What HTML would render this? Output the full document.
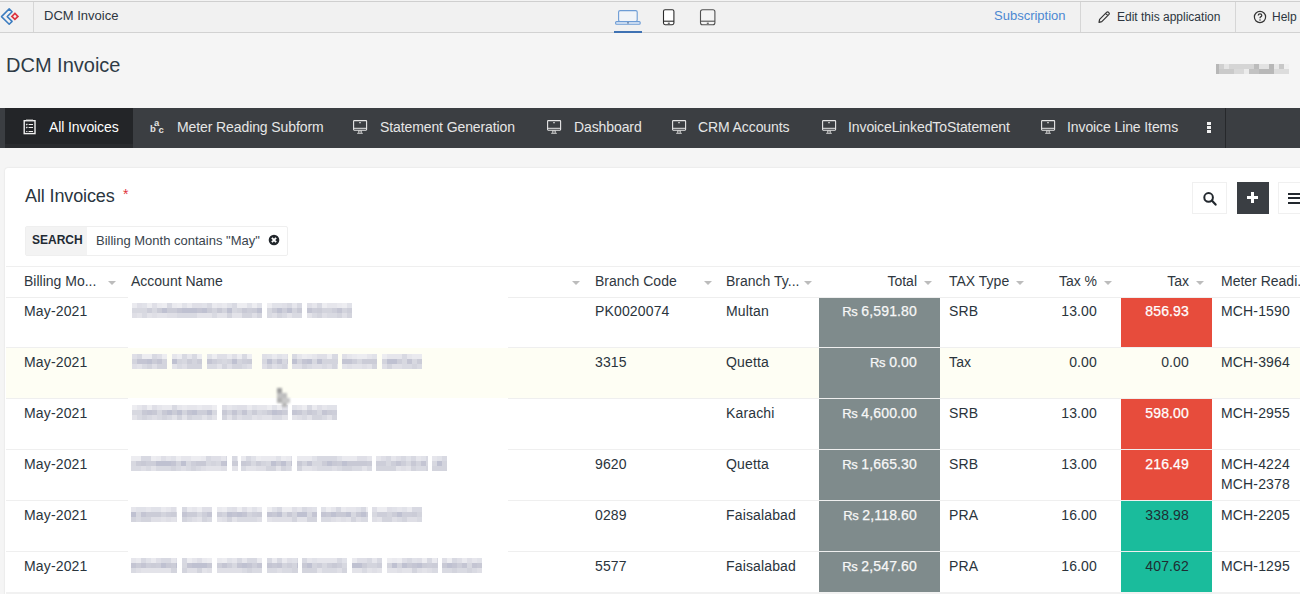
<!DOCTYPE html>
<html><head><meta charset="utf-8">
<style>
*{box-sizing:border-box;margin:0;padding:0}
html,body{width:1300px;height:594px;overflow:hidden;background:#f5f5f5;font-family:"Liberation Sans",sans-serif;color:#2f3740}
.abs{position:absolute;white-space:nowrap}
#top{position:absolute;left:0;top:0;width:1300px;height:33px;background:#f1f1f1;border-top:1px solid #f3f3f3;border-bottom:1px solid #d2d2d2}
.vsep{position:absolute;top:1px;width:1px;height:30px;background:#d6d6d6}
.tt{position:absolute;font-size:13px;white-space:nowrap;line-height:16px}
#hdr{position:absolute;left:0;top:33px;width:1300px;height:75px;background:#f5f5f5}
#nav{position:absolute;left:0;top:108px;width:1300px;height:40px;background:#3b3e42}
.tab{position:absolute;top:-1px;height:40px;color:#e6e6e6;font-size:14px;line-height:40px;letter-spacing:-0.1px;white-space:nowrap}
.tab svg{position:absolute}
#card{position:absolute;left:5px;top:168px;width:1300px;height:440px;background:#fff;border-radius:3px;box-shadow:0 0 2px rgba(0,0,0,.12)}
.th{font-size:14px;line-height:18px;color:#2f3740}
.arr{width:0;height:0;border-left:4px solid transparent;border-right:4px solid transparent;border-top:4px solid #bcbcbc}
.td{font-size:14px;line-height:20px;color:#2a343c;letter-spacing:0.15px}
.tot{color:#f7f7f7;-webkit-text-stroke:0.25px #f7f7f7}
.rs{font-size:13px;letter-spacing:-0.4px}
.bl{height:14px;background:linear-gradient(#e6e6ec 0,#dcdce4 30%,#c9cad4 45%,#cfd0d9 65%,#dadae2 80%,#e4e4ea 100%);filter:blur(0.7px)}
</style></head><body>
<div id="top">
  <div class="abs" style="left:0;top:0;width:1300px;height:1px;background:#cfcfcf"></div>
  <svg class="abs" style="left:0;top:0" width="22" height="30" viewBox="0 1 22 30">
    <path d="M9.2 8.9 L12.1 11.8 L7.2 16.6 L12.1 21.4 L9.2 24.3 L1.5 16.6 Z" fill="none" stroke="#3b7cc0" stroke-width="1.5" stroke-linejoin="round"/>
    <path d="M14.9 13.4 L17.9 16.4 L14.9 19.4 L11.9 16.4 Z" fill="none" stroke="#dd3540" stroke-width="1.7"/>
  </svg>
  <div class="vsep" style="left:33px"></div>
  <div class="tt" style="left:44px;top:7px;color:#2d3640">DCM Invoice</div>
  <!-- devices -->
  <svg class="abs" style="left:614px;top:7px" width="28" height="18" viewBox="0 0 28 18">
    <rect x="4.6" y="2.6" width="18.6" height="11" rx="1.5" fill="#f1f4f8" stroke="#6d9cd5" stroke-width="1.1"/>
    <rect x="1.6" y="13.6" width="24.6" height="2.6" rx="1" fill="#e6eef8" stroke="#6d9cd5" stroke-width="1.1"/>
    <rect x="13.2" y="14.4" width="1.6" height="1" fill="#2f4f78"/>
  </svg>
  <div class="abs" style="left:614px;top:30px;width:28px;height:2px;background:#3f72b3"></div>
  <svg class="abs" style="left:662px;top:7px" width="14" height="18" viewBox="0 0 14 18">
    <rect x="1.5" y="1.7" width="10.4" height="15" rx="1.6" fill="#fff" stroke="#2b2b2b" stroke-width="1.1"/>
    <line x1="1.5" y1="13.2" x2="12" y2="13.2" stroke="#2b2b2b" stroke-width="1.1"/>
    <rect x="5.8" y="14.7" width="2" height="1" fill="#2b2b2b"/>
  </svg>
  <svg class="abs" style="left:699px;top:7px" width="18" height="18" viewBox="0 0 18 18">
    <rect x="1.5" y="1.7" width="14.4" height="15" rx="2" fill="#f4f4f4" stroke="#505050" stroke-width="1.1"/>
    <line x1="1.5" y1="13.2" x2="16" y2="13.2" stroke="#505050" stroke-width="1.1"/>
    <rect x="7.8" y="14.7" width="2" height="1" fill="#333"/>
  </svg>
  <div class="tt" style="left:994px;top:7px;color:#4c88d2">Subscription</div>
  <div class="vsep" style="left:1080px"></div>
  <svg class="abs" style="left:1097px;top:9px" width="14" height="14" viewBox="0 0 14 14">
    <path d="M2 12.3 L2.6 9.4 L9.8 2.2 Q10.6 1.5 11.4 2.2 L12 2.8 Q12.7 3.6 12 4.4 L4.8 11.6 Z M8.6 3.4 L10.9 5.6" fill="none" stroke="#333" stroke-width="1.2" stroke-linejoin="round"/>
  </svg>
  <div class="tt" style="left:1117px;top:8px;font-size:12px;color:#2d3640">Edit this application</div>
  <div class="vsep" style="left:1235px"></div>
  <svg class="abs" style="left:1253px;top:9px" width="14" height="14" viewBox="0 0 14 14">
    <circle cx="7" cy="7" r="5.6" fill="none" stroke="#333" stroke-width="1.2"/>
    <path d="M5.2 5.6 Q5.2 3.8 7 3.8 Q8.8 3.8 8.8 5.4 Q8.8 6.4 7.6 6.9 Q7 7.2 7 8.2" fill="none" stroke="#333" stroke-width="1.2"/>
    <circle cx="7" cy="10" r="0.75" fill="#333"/>
  </svg>
  <div class="tt" style="left:1272px;top:8px;font-size:12px;color:#2d3640">Help</div>
</div>
<div id="hdr">
  <div class="abs" style="left:6px;top:20px;font-size:20px;line-height:24px;color:#2f3b46">DCM Invoice</div>
  <div class="abs" style="left:0;top:0;width:1300px;height:75px;filter:blur(0.6px)"><div class="abs" style="left:1216px;top:31px;width:3px;height:5px;background:#b7b7b7"></div><div class="abs" style="left:1219px;top:31px;width:5px;height:5px;background:#d0d0d0"></div><div class="abs" style="left:1224px;top:31px;width:5px;height:5px;background:#e5e5e5"></div><div class="abs" style="left:1229px;top:31px;width:25px;height:5px;background:#d5d5d5"></div><div class="abs" style="left:1254px;top:31px;width:5px;height:5px;background:#bcbcbc"></div><div class="abs" style="left:1259px;top:31px;width:10px;height:5px;background:#e2e2e2"></div><div class="abs" style="left:1269px;top:31px;width:5px;height:5px;background:#b7b7b7"></div><div class="abs" style="left:1274px;top:31px;width:5px;height:5px;background:#e8e8e8"></div><div class="abs" style="left:1279px;top:31px;width:5px;height:5px;background:#c8c8c8"></div><div class="abs" style="left:1284px;top:31px;width:5px;height:5px;background:#f0f0f0"></div><div class="abs" style="left:1216px;top:36px;width:3px;height:5px;background:#b7b7b7"></div><div class="abs" style="left:1219px;top:36px;width:15px;height:5px;background:#cacaca"></div><div class="abs" style="left:1234px;top:36px;width:10px;height:5px;background:#d9d9d9"></div><div class="abs" style="left:1244px;top:36px;width:5px;height:5px;background:#ececec"></div><div class="abs" style="left:1249px;top:36px;width:10px;height:5px;background:#c2c2c2"></div><div class="abs" style="left:1259px;top:36px;width:15px;height:5px;background:#b8b8b8"></div><div class="abs" style="left:1274px;top:36px;width:15px;height:5px;background:#dcdcdc"></div></div>
</div>
<div id="nav">
  <div class="abs" style="left:5px;top:0;width:128px;height:40px;background:#232528"></div><div class="abs" style="left:5px;top:36px;width:128px;height:4px;background:#292b2e"></div>
  <svg class="abs" style="left:22px;top:11px" width="15" height="16" viewBox="0 0 15 16"><rect x="2.2" y="1.7" width="10.8" height="12.9" fill="none" stroke="#f0f0f0" stroke-width="1.4"/><path d="M4.2 6 L5.4 4.8 M4.2 9 L5.4 7.8 M4.2 12.5 L5.4 12.5 M6.6 5.5 L11 5.5 M6.6 8.5 L11 8.5 M6.6 12.5 L11 12.5" stroke="#f0f0f0" stroke-width="1.2"/><path d="M4 1.2 L5 0.6 L6 1.2 L7 0.6 L8 1.2 L9 0.6 L10 1.2 L11 0.6" fill="none" stroke="#cfcfcf" stroke-width="0.8"/></svg>
  <div class="abs tab" style="left:49px;color:#fff">All Invoices</div>
    <svg class="abs" style="left:148px;top:9px" width="18" height="18" viewBox="0 0 18 18"><text x="6" y="9" font-family="Liberation Sans" font-weight="bold" font-size="9.5" fill="#e4e4e4">a</text><text x="2" y="14.8" font-family="Liberation Sans" font-weight="bold" font-size="9.5" fill="#e4e4e4">b</text><text x="10.6" y="16" font-family="Liberation Sans" font-weight="bold" font-size="9.5" fill="#e4e4e4">c</text></svg>
  <div class="abs tab" style="left:177px">Meter Reading Subform</div>
  <svg class="abs" style="left:352px;top:11px" width="16" height="16" viewBox="0 0 16 16"><rect x="1.6" y="1.6" width="13" height="9.6" rx="0.6" fill="none" stroke="#e6e6e6" stroke-width="1.1"/><line x1="1.6" y1="9.3" x2="14.6" y2="9.3" stroke="#e6e6e6" stroke-width="1"/><rect x="7" y="3.3" width="2" height="0.9" fill="#e6e6e6"/><path d="M6.2 11.8 L9.8 11.8 M5.2 14.3 L10.8 14.3 M6.8 11.5 L6.8 14 M9.2 11.5 L9.2 14" stroke="#d0d0d0" stroke-width="1"/></svg>
  <div class="abs tab" style="left:380px">Statement Generation</div>
  <svg class="abs" style="left:546px;top:11px" width="16" height="16" viewBox="0 0 16 16"><rect x="1.6" y="1.6" width="13" height="9.6" rx="0.6" fill="none" stroke="#e6e6e6" stroke-width="1.1"/><line x1="1.6" y1="9.3" x2="14.6" y2="9.3" stroke="#e6e6e6" stroke-width="1"/><rect x="7" y="3.3" width="2" height="0.9" fill="#e6e6e6"/><path d="M6.2 11.8 L9.8 11.8 M5.2 14.3 L10.8 14.3 M6.8 11.5 L6.8 14 M9.2 11.5 L9.2 14" stroke="#d0d0d0" stroke-width="1"/></svg>
  <div class="abs tab" style="left:574px">Dashboard</div>
  <svg class="abs" style="left:671px;top:11px" width="16" height="16" viewBox="0 0 16 16"><rect x="1.6" y="1.6" width="13" height="9.6" rx="0.6" fill="none" stroke="#e6e6e6" stroke-width="1.1"/><line x1="1.6" y1="9.3" x2="14.6" y2="9.3" stroke="#e6e6e6" stroke-width="1"/><rect x="7" y="3.3" width="2" height="0.9" fill="#e6e6e6"/><path d="M6.2 11.8 L9.8 11.8 M5.2 14.3 L10.8 14.3 M6.8 11.5 L6.8 14 M9.2 11.5 L9.2 14" stroke="#d0d0d0" stroke-width="1"/></svg>
  <div class="abs tab" style="left:698px">CRM Accounts</div>
  <svg class="abs" style="left:821px;top:11px" width="16" height="16" viewBox="0 0 16 16"><rect x="1.6" y="1.6" width="13" height="9.6" rx="0.6" fill="none" stroke="#e6e6e6" stroke-width="1.1"/><line x1="1.6" y1="9.3" x2="14.6" y2="9.3" stroke="#e6e6e6" stroke-width="1"/><rect x="7" y="3.3" width="2" height="0.9" fill="#e6e6e6"/><path d="M6.2 11.8 L9.8 11.8 M5.2 14.3 L10.8 14.3 M6.8 11.5 L6.8 14 M9.2 11.5 L9.2 14" stroke="#d0d0d0" stroke-width="1"/></svg>
  <div class="abs tab" style="left:848px">InvoiceLinkedToStatement</div>
  <svg class="abs" style="left:1040px;top:11px" width="16" height="16" viewBox="0 0 16 16"><rect x="1.6" y="1.6" width="13" height="9.6" rx="0.6" fill="none" stroke="#e6e6e6" stroke-width="1.1"/><line x1="1.6" y1="9.3" x2="14.6" y2="9.3" stroke="#e6e6e6" stroke-width="1"/><rect x="7" y="3.3" width="2" height="0.9" fill="#e6e6e6"/><path d="M6.2 11.8 L9.8 11.8 M5.2 14.3 L10.8 14.3 M6.8 11.5 L6.8 14 M9.2 11.5 L9.2 14" stroke="#d0d0d0" stroke-width="1"/></svg>
  <div class="abs tab" style="left:1067px">Invoice Line Items</div>
  <div class="abs" style="left:1207px;top:14px;width:4px;height:3px;background:#f0f0f0"></div><div class="abs" style="left:1207px;top:18px;width:4px;height:3px;background:#f0f0f0"></div><div class="abs" style="left:1207px;top:22px;width:4px;height:3px;background:#f0f0f0"></div>
  <div class="abs" style="left:1225px;top:0;width:1px;height:40px;background:#26282b"></div>
</div>
<div id="card"></div>
<div class="abs" style="left:25px;top:185px;font-size:18px;line-height:22px;letter-spacing:-0.12px;color:#2a3540">All Invoices</div>
<div class="abs" style="left:123px;top:186px;font-size:14px;line-height:16px;color:#e0343c">*</div>
<div class="abs" style="left:25px;top:226px;width:263px;height:30px;border:1px solid #efefef;background:#fff;border-radius:2px"></div>
<div class="abs" style="left:26px;top:227px;width:61px;height:28px;background:#f3f3f3"></div>
<div class="abs" style="left:32px;top:232px;font-size:12px;line-height:16px;font-weight:bold;color:#1f2a33">SEARCH</div>
<div class="abs" style="left:96px;top:233px;font-size:13px;line-height:16px;color:#3a444d">Billing Month contains "May"</div>
<svg class="abs" style="left:268px;top:234px" width="12" height="12" viewBox="0 0 12 12"><circle cx="6" cy="6" r="5.3" fill="#22272c"/><path d="M3.9 3.9 L8.1 8.1 M8.1 3.9 L3.9 8.1" stroke="#fff" stroke-width="1.9"/></svg>
<div class="abs" style="left:1192px;top:182px;width:35px;height:32px;border:1px solid #f0f0f0;background:#fff"></div>
<svg class="abs" style="left:1201px;top:190px" width="20" height="20" viewBox="0 0 20 20"><circle cx="7.6" cy="7.4" r="4.3" fill="none" stroke="#22282e" stroke-width="2"/><path d="M10.8 10.6 L14.6 14.6" stroke="#22282e" stroke-width="2.2" stroke-linecap="round"/></svg>
<div class="abs" style="left:1237px;top:182px;width:32px;height:32px;background:#3a3e43"></div>
<div class="abs" style="left:1251px;top:192px;width:3px;height:11px;background:#fff"></div>
<div class="abs" style="left:1247px;top:196px;width:11px;height:3px;background:#fff"></div>
<div class="abs" style="left:1278px;top:182px;width:40px;height:32px;border:1px solid #f0f0f0;background:#fff"></div>
<div class="abs" style="left:1288px;top:193px;width:14px;height:2px;background:#22282e"></div>
<div class="abs" style="left:1288px;top:197px;width:14px;height:2px;background:#22282e"></div>
<div class="abs" style="left:1288px;top:202px;width:14px;height:2px;background:#22282e"></div>
<div class="abs" style="left:6px;top:266px;width:1294px;height:1px;background:#efefef"></div>
<div class="abs" style="left:6px;top:297px;width:122px;height:1px;background:#eeeeee"></div>
<div class="abs" style="left:508px;top:297px;width:792px;height:1px;background:#eeeeee"></div>
<div class="abs th" style="left:24px;top:272px">Billing Mo...</div>
<div class="abs arr" style="left:108px;top:281px"></div>
<div class="abs th" style="left:131px;top:272px">Account Name</div>
<div class="abs arr" style="left:572px;top:281px"></div>
<div class="abs th" style="left:595px;top:272px">Branch Code</div>
<div class="abs arr" style="left:704px;top:281px"></div>
<div class="abs th" style="left:726px;top:272px">Branch Ty...</div>
<div class="abs arr" style="left:804px;top:281px"></div>
<div class="abs th" style="right:383px;top:272px">Total</div>
<div class="abs arr" style="left:924px;top:281px"></div>
<div class="abs th" style="left:949px;top:272px">TAX Type</div>
<div class="abs arr" style="left:1016px;top:281px"></div>
<div class="abs th" style="right:203px;top:272px">Tax %</div>
<div class="abs arr" style="left:1104px;top:281px"></div>
<div class="abs th" style="right:111px;top:272px">Tax</div>
<div class="abs arr" style="left:1196px;top:281px"></div>
<div class="abs th" style="left:1221px;top:272px">Meter Readi.</div>
<div class="abs" style="left:6px;top:347px;width:122px;height:1px;background:#efefef"></div>
<div class="abs" style="left:508px;top:347px;width:792px;height:1px;background:#efefef"></div>
<div class="abs" style="left:819px;top:298px;width:121px;height:49px;background:#7f8b8c"></div>
<div class="abs" style="left:1121px;top:298px;width:91px;height:49px;background:#e74c3c"></div>
<div class="abs td" style="left:24px;top:301px">May-2021</div>
<div class="abs td" style="left:595px;top:301px">PK0020074</div>
<div class="abs td" style="left:726px;top:301px">Multan</div>
<div class="abs td tot" style="right:383px;top:301px"><span class="rs">Rs</span> 6,591.80</div>
<div class="abs td" style="left:949px;top:301px">SRB</div>
<div class="abs td" style="right:203px;top:301px">13.00</div>
<div class="abs td" style="right:111px;top:301px;color:#fff;-webkit-text-stroke:0.25px #fff">856.93</div>
<div class="abs td" style="left:1221px;top:301px">MCH-1590</div>
<div class="abs" style="left:0;top:0;width:1300px;height:594px;filter:blur(0.5px)"><div class="abs" style="left:132px;top:303px;width:5px;height:5px;background:#eaeaef"></div><div class="abs" style="left:132px;top:308px;width:5px;height:5px;background:#d7d8e0"></div><div class="abs" style="left:132px;top:313px;width:5px;height:5px;background:#dfdfe6"></div><div class="abs" style="left:137px;top:303px;width:5px;height:5px;background:#dfdfe7"></div><div class="abs" style="left:137px;top:308px;width:5px;height:5px;background:#d7d8e0"></div><div class="abs" style="left:137px;top:313px;width:5px;height:5px;background:#e3e3e9"></div><div class="abs" style="left:142px;top:303px;width:5px;height:5px;background:#e1e2e9"></div><div class="abs" style="left:142px;top:308px;width:5px;height:5px;background:#d7d8e0"></div><div class="abs" style="left:142px;top:313px;width:5px;height:5px;background:#d9dae2"></div><div class="abs" style="left:147px;top:303px;width:5px;height:5px;background:#ededf1"></div><div class="abs" style="left:147px;top:308px;width:5px;height:5px;background:#cdced9"></div><div class="abs" style="left:147px;top:313px;width:5px;height:5px;background:#e3e3e9"></div><div class="abs" style="left:152px;top:303px;width:5px;height:5px;background:#dfdfe7"></div><div class="abs" style="left:152px;top:308px;width:5px;height:5px;background:#d7d8e0"></div><div class="abs" style="left:152px;top:313px;width:5px;height:5px;background:#dfdfe6"></div><div class="abs" style="left:157px;top:303px;width:5px;height:5px;background:#eaeaef"></div><div class="abs" style="left:157px;top:308px;width:5px;height:5px;background:#cbccd7"></div><div class="abs" style="left:157px;top:313px;width:5px;height:5px;background:#e3e3e9"></div><div class="abs" style="left:162px;top:303px;width:5px;height:5px;background:#ededf1"></div><div class="abs" style="left:162px;top:308px;width:5px;height:5px;background:#bfc1d1"></div><div class="abs" style="left:162px;top:313px;width:5px;height:5px;background:#e3e3e9"></div><div class="abs" style="left:167px;top:303px;width:5px;height:5px;background:#d8d9e2"></div><div class="abs" style="left:167px;top:308px;width:5px;height:5px;background:#cbccd7"></div><div class="abs" style="left:167px;top:313px;width:5px;height:5px;background:#dfdfe6"></div><div class="abs" style="left:172px;top:303px;width:5px;height:5px;background:#eaeaef"></div><div class="abs" style="left:172px;top:308px;width:5px;height:5px;background:#cbccd7"></div><div class="abs" style="left:172px;top:313px;width:5px;height:5px;background:#dfdfe6"></div><div class="abs" style="left:177px;top:303px;width:5px;height:5px;background:#ededf1"></div><div class="abs" style="left:177px;top:308px;width:5px;height:5px;background:#c4c5d3"></div><div class="abs" style="left:177px;top:313px;width:5px;height:5px;background:#d9dae2"></div><div class="abs" style="left:182px;top:303px;width:5px;height:5px;background:#e1e2e9"></div><div class="abs" style="left:182px;top:308px;width:5px;height:5px;background:#bfc1d1"></div><div class="abs" style="left:182px;top:313px;width:5px;height:5px;background:#d9dae2"></div><div class="abs" style="left:187px;top:303px;width:5px;height:5px;background:#eaeaef"></div><div class="abs" style="left:187px;top:308px;width:5px;height:5px;background:#bfc1d1"></div><div class="abs" style="left:187px;top:313px;width:5px;height:5px;background:#d9dae2"></div><div class="abs" style="left:192px;top:303px;width:5px;height:5px;background:#dfdfe7"></div><div class="abs" style="left:192px;top:308px;width:5px;height:5px;background:#bfc1d1"></div><div class="abs" style="left:192px;top:313px;width:5px;height:5px;background:#d9dae2"></div><div class="abs" style="left:197px;top:303px;width:5px;height:5px;background:#dfdfe7"></div><div class="abs" style="left:197px;top:308px;width:5px;height:5px;background:#c4c5d3"></div><div class="abs" style="left:197px;top:313px;width:5px;height:5px;background:#e3e3e9"></div><div class="abs" style="left:202px;top:303px;width:5px;height:5px;background:#e1e2e9"></div><div class="abs" style="left:202px;top:308px;width:5px;height:5px;background:#bfc1d1"></div><div class="abs" style="left:202px;top:313px;width:5px;height:5px;background:#e3e3e9"></div><div class="abs" style="left:207px;top:303px;width:5px;height:5px;background:#d8d9e2"></div><div class="abs" style="left:207px;top:308px;width:5px;height:5px;background:#cbccd7"></div><div class="abs" style="left:207px;top:313px;width:5px;height:5px;background:#e3e3e9"></div><div class="abs" style="left:212px;top:303px;width:5px;height:5px;background:#eaeaef"></div><div class="abs" style="left:212px;top:308px;width:5px;height:5px;background:#d3d4dd"></div><div class="abs" style="left:212px;top:313px;width:5px;height:5px;background:#d9dae2"></div><div class="abs" style="left:217px;top:303px;width:5px;height:5px;background:#e6e6ec"></div><div class="abs" style="left:217px;top:308px;width:5px;height:5px;background:#c8c9d5"></div><div class="abs" style="left:217px;top:313px;width:5px;height:5px;background:#e3e3e9"></div><div class="abs" style="left:222px;top:303px;width:5px;height:5px;background:#eaeaef"></div><div class="abs" style="left:222px;top:308px;width:5px;height:5px;background:#d3d4dd"></div><div class="abs" style="left:222px;top:313px;width:5px;height:5px;background:#e3e3e9"></div><div class="abs" style="left:227px;top:303px;width:5px;height:5px;background:#e1e2e9"></div><div class="abs" style="left:227px;top:308px;width:5px;height:5px;background:#bfc1d1"></div><div class="abs" style="left:227px;top:313px;width:5px;height:5px;background:#d3d4dd"></div><div class="abs" style="left:232px;top:303px;width:5px;height:5px;background:#d8d9e2"></div><div class="abs" style="left:232px;top:308px;width:5px;height:5px;background:#d7d8e0"></div><div class="abs" style="left:232px;top:313px;width:5px;height:5px;background:#e3e3e9"></div><div class="abs" style="left:237px;top:303px;width:5px;height:5px;background:#ededf1"></div><div class="abs" style="left:237px;top:308px;width:5px;height:5px;background:#d3d4dd"></div><div class="abs" style="left:237px;top:313px;width:5px;height:5px;background:#e3e3e9"></div><div class="abs" style="left:242px;top:303px;width:5px;height:5px;background:#ededf1"></div><div class="abs" style="left:242px;top:308px;width:5px;height:5px;background:#c8c9d5"></div><div class="abs" style="left:242px;top:313px;width:5px;height:5px;background:#d3d4dd"></div><div class="abs" style="left:247px;top:303px;width:5px;height:5px;background:#e1e2e9"></div><div class="abs" style="left:247px;top:308px;width:5px;height:5px;background:#cdced9"></div><div class="abs" style="left:247px;top:313px;width:5px;height:5px;background:#d3d4dd"></div><div class="abs" style="left:252px;top:303px;width:5px;height:5px;background:#ededf1"></div><div class="abs" style="left:252px;top:308px;width:5px;height:5px;background:#cbccd7"></div><div class="abs" style="left:252px;top:313px;width:5px;height:5px;background:#dfdfe6"></div><div class="abs" style="left:257px;top:303px;width:5px;height:5px;background:#e1e2e9"></div><div class="abs" style="left:257px;top:308px;width:5px;height:5px;background:#bfc1d1"></div><div class="abs" style="left:257px;top:313px;width:5px;height:5px;background:#d3d4dd"></div><div class="abs" style="left:267px;top:303px;width:5px;height:5px;background:#ededf1"></div><div class="abs" style="left:267px;top:308px;width:5px;height:5px;background:#d7d8e0"></div><div class="abs" style="left:267px;top:313px;width:5px;height:5px;background:#d9dae2"></div><div class="abs" style="left:272px;top:303px;width:5px;height:5px;background:#e1e2e9"></div><div class="abs" style="left:272px;top:308px;width:5px;height:5px;background:#cbccd7"></div><div class="abs" style="left:272px;top:313px;width:5px;height:5px;background:#dfdfe6"></div><div class="abs" style="left:277px;top:303px;width:5px;height:5px;background:#e1e2e9"></div><div class="abs" style="left:277px;top:308px;width:5px;height:5px;background:#bfc1d1"></div><div class="abs" style="left:277px;top:313px;width:5px;height:5px;background:#d3d4dd"></div><div class="abs" style="left:282px;top:303px;width:5px;height:5px;background:#dfdfe7"></div><div class="abs" style="left:282px;top:308px;width:5px;height:5px;background:#cdced9"></div><div class="abs" style="left:282px;top:313px;width:5px;height:5px;background:#d9dae2"></div><div class="abs" style="left:287px;top:303px;width:5px;height:5px;background:#d8d9e2"></div><div class="abs" style="left:287px;top:308px;width:5px;height:5px;background:#bfc1d1"></div><div class="abs" style="left:287px;top:313px;width:5px;height:5px;background:#e3e3e9"></div><div class="abs" style="left:292px;top:303px;width:5px;height:5px;background:#e6e6ec"></div><div class="abs" style="left:292px;top:308px;width:5px;height:5px;background:#d3d4dd"></div><div class="abs" style="left:292px;top:313px;width:5px;height:5px;background:#d9dae2"></div><div class="abs" style="left:297px;top:303px;width:5px;height:5px;background:#d8d9e2"></div><div class="abs" style="left:297px;top:308px;width:5px;height:5px;background:#c8c9d5"></div><div class="abs" style="left:297px;top:313px;width:5px;height:5px;background:#d9dae2"></div><div class="abs" style="left:307px;top:303px;width:5px;height:5px;background:#dfdfe7"></div><div class="abs" style="left:307px;top:308px;width:5px;height:5px;background:#c4c5d3"></div><div class="abs" style="left:307px;top:313px;width:5px;height:5px;background:#e3e3e9"></div><div class="abs" style="left:312px;top:303px;width:5px;height:5px;background:#e6e6ec"></div><div class="abs" style="left:312px;top:308px;width:5px;height:5px;background:#cdced9"></div><div class="abs" style="left:312px;top:313px;width:5px;height:5px;background:#d9dae2"></div><div class="abs" style="left:317px;top:303px;width:5px;height:5px;background:#d8d9e2"></div><div class="abs" style="left:317px;top:308px;width:5px;height:5px;background:#cbccd7"></div><div class="abs" style="left:317px;top:313px;width:5px;height:5px;background:#d3d4dd"></div><div class="abs" style="left:322px;top:303px;width:5px;height:5px;background:#ededf1"></div><div class="abs" style="left:322px;top:308px;width:5px;height:5px;background:#d3d4dd"></div><div class="abs" style="left:322px;top:313px;width:5px;height:5px;background:#dfdfe6"></div><div class="abs" style="left:327px;top:303px;width:5px;height:5px;background:#e6e6ec"></div><div class="abs" style="left:327px;top:308px;width:5px;height:5px;background:#d3d4dd"></div><div class="abs" style="left:327px;top:313px;width:5px;height:5px;background:#d9dae2"></div><div class="abs" style="left:332px;top:303px;width:5px;height:5px;background:#e6e6ec"></div><div class="abs" style="left:332px;top:308px;width:5px;height:5px;background:#cdced9"></div><div class="abs" style="left:332px;top:313px;width:5px;height:5px;background:#d9dae2"></div><div class="abs" style="left:337px;top:303px;width:5px;height:5px;background:#eaeaef"></div><div class="abs" style="left:337px;top:308px;width:5px;height:5px;background:#c4c5d3"></div><div class="abs" style="left:337px;top:313px;width:5px;height:5px;background:#d3d4dd"></div><div class="abs" style="left:342px;top:303px;width:5px;height:5px;background:#ededf1"></div><div class="abs" style="left:342px;top:308px;width:5px;height:5px;background:#d3d4dd"></div><div class="abs" style="left:342px;top:313px;width:5px;height:5px;background:#dfdfe6"></div><div class="abs" style="left:347px;top:303px;width:5px;height:5px;background:#e1e2e9"></div><div class="abs" style="left:347px;top:308px;width:5px;height:5px;background:#cdced9"></div><div class="abs" style="left:347px;top:313px;width:5px;height:5px;background:#d3d4dd"></div></div>
<div class="abs" style="left:6px;top:348px;width:1294px;height:50px;background:#fefef4"></div>
<div class="abs" style="left:6px;top:398px;width:122px;height:1px;background:#efefef"></div>
<div class="abs" style="left:508px;top:398px;width:792px;height:1px;background:#efefef"></div>
<div class="abs" style="left:819px;top:348px;width:121px;height:50px;background:#7f8b8c"></div>
<div class="abs td" style="left:24px;top:352px">May-2021</div>
<div class="abs td" style="left:595px;top:352px">3315</div>
<div class="abs td" style="left:726px;top:352px">Quetta</div>
<div class="abs td tot" style="right:383px;top:352px"><span class="rs">Rs</span> 0.00</div>
<div class="abs td" style="left:949px;top:352px">Tax</div>
<div class="abs td" style="right:203px;top:352px">0.00</div>
<div class="abs td" style="right:111px;top:352px;color:#2f3740;">0.00</div>
<div class="abs td" style="left:1221px;top:352px">MCH-3964</div>
<div class="abs" style="left:0;top:0;width:1300px;height:594px;filter:blur(0.5px)"><div class="abs" style="left:132px;top:354px;width:5px;height:5px;background:#dfdfe7"></div><div class="abs" style="left:132px;top:359px;width:5px;height:5px;background:#d3d4dd"></div><div class="abs" style="left:132px;top:364px;width:5px;height:5px;background:#dfdfe6"></div><div class="abs" style="left:137px;top:354px;width:5px;height:5px;background:#d8d9e2"></div><div class="abs" style="left:137px;top:359px;width:5px;height:5px;background:#c4c5d3"></div><div class="abs" style="left:137px;top:364px;width:5px;height:5px;background:#e3e3e9"></div><div class="abs" style="left:142px;top:354px;width:5px;height:5px;background:#ededf1"></div><div class="abs" style="left:142px;top:359px;width:5px;height:5px;background:#c4c5d3"></div><div class="abs" style="left:142px;top:364px;width:5px;height:5px;background:#d9dae2"></div><div class="abs" style="left:147px;top:354px;width:5px;height:5px;background:#ededf1"></div><div class="abs" style="left:147px;top:359px;width:5px;height:5px;background:#bfc1d1"></div><div class="abs" style="left:147px;top:364px;width:5px;height:5px;background:#d3d4dd"></div><div class="abs" style="left:152px;top:354px;width:5px;height:5px;background:#d8d9e2"></div><div class="abs" style="left:152px;top:359px;width:5px;height:5px;background:#cbccd7"></div><div class="abs" style="left:152px;top:364px;width:5px;height:5px;background:#dfdfe6"></div><div class="abs" style="left:157px;top:354px;width:5px;height:5px;background:#dfdfe7"></div><div class="abs" style="left:157px;top:359px;width:5px;height:5px;background:#c4c5d3"></div><div class="abs" style="left:157px;top:364px;width:5px;height:5px;background:#d3d4dd"></div><div class="abs" style="left:162px;top:354px;width:5px;height:5px;background:#ededf1"></div><div class="abs" style="left:162px;top:359px;width:5px;height:5px;background:#d3d4dd"></div><div class="abs" style="left:162px;top:364px;width:5px;height:5px;background:#d3d4dd"></div><div class="abs" style="left:172px;top:354px;width:5px;height:5px;background:#e6e6ec"></div><div class="abs" style="left:172px;top:359px;width:5px;height:5px;background:#bfc1d1"></div><div class="abs" style="left:172px;top:364px;width:5px;height:5px;background:#e3e3e9"></div><div class="abs" style="left:177px;top:354px;width:5px;height:5px;background:#ededf1"></div><div class="abs" style="left:177px;top:359px;width:5px;height:5px;background:#d3d4dd"></div><div class="abs" style="left:177px;top:364px;width:5px;height:5px;background:#d9dae2"></div><div class="abs" style="left:182px;top:354px;width:5px;height:5px;background:#d8d9e2"></div><div class="abs" style="left:182px;top:359px;width:5px;height:5px;background:#d7d8e0"></div><div class="abs" style="left:182px;top:364px;width:5px;height:5px;background:#dfdfe6"></div><div class="abs" style="left:187px;top:354px;width:5px;height:5px;background:#e6e6ec"></div><div class="abs" style="left:187px;top:359px;width:5px;height:5px;background:#cbccd7"></div><div class="abs" style="left:187px;top:364px;width:5px;height:5px;background:#d3d4dd"></div><div class="abs" style="left:192px;top:354px;width:5px;height:5px;background:#d8d9e2"></div><div class="abs" style="left:192px;top:359px;width:5px;height:5px;background:#d3d4dd"></div><div class="abs" style="left:192px;top:364px;width:5px;height:5px;background:#d3d4dd"></div><div class="abs" style="left:197px;top:354px;width:5px;height:5px;background:#ededf1"></div><div class="abs" style="left:197px;top:359px;width:5px;height:5px;background:#cbccd7"></div><div class="abs" style="left:197px;top:364px;width:5px;height:5px;background:#d3d4dd"></div><div class="abs" style="left:207px;top:354px;width:5px;height:5px;background:#e1e2e9"></div><div class="abs" style="left:207px;top:359px;width:5px;height:5px;background:#c4c5d3"></div><div class="abs" style="left:207px;top:364px;width:5px;height:5px;background:#d9dae2"></div><div class="abs" style="left:212px;top:354px;width:5px;height:5px;background:#ededf1"></div><div class="abs" style="left:212px;top:359px;width:5px;height:5px;background:#cdced9"></div><div class="abs" style="left:212px;top:364px;width:5px;height:5px;background:#d9dae2"></div><div class="abs" style="left:217px;top:354px;width:5px;height:5px;background:#dfdfe7"></div><div class="abs" style="left:217px;top:359px;width:5px;height:5px;background:#d3d4dd"></div><div class="abs" style="left:217px;top:364px;width:5px;height:5px;background:#e3e3e9"></div><div class="abs" style="left:222px;top:354px;width:5px;height:5px;background:#dfdfe7"></div><div class="abs" style="left:222px;top:359px;width:5px;height:5px;background:#d7d8e0"></div><div class="abs" style="left:222px;top:364px;width:5px;height:5px;background:#d3d4dd"></div><div class="abs" style="left:227px;top:354px;width:5px;height:5px;background:#eaeaef"></div><div class="abs" style="left:227px;top:359px;width:5px;height:5px;background:#d3d4dd"></div><div class="abs" style="left:227px;top:364px;width:5px;height:5px;background:#dfdfe6"></div><div class="abs" style="left:232px;top:354px;width:5px;height:5px;background:#dfdfe7"></div><div class="abs" style="left:232px;top:359px;width:5px;height:5px;background:#bfc1d1"></div><div class="abs" style="left:232px;top:364px;width:5px;height:5px;background:#d3d4dd"></div><div class="abs" style="left:237px;top:354px;width:5px;height:5px;background:#ededf1"></div><div class="abs" style="left:237px;top:359px;width:5px;height:5px;background:#d3d4dd"></div><div class="abs" style="left:237px;top:364px;width:5px;height:5px;background:#d3d4dd"></div><div class="abs" style="left:242px;top:354px;width:5px;height:5px;background:#d8d9e2"></div><div class="abs" style="left:242px;top:359px;width:5px;height:5px;background:#cdced9"></div><div class="abs" style="left:242px;top:364px;width:5px;height:5px;background:#d9dae2"></div><div class="abs" style="left:247px;top:354px;width:5px;height:5px;background:#ededf1"></div><div class="abs" style="left:247px;top:359px;width:5px;height:5px;background:#cbccd7"></div><div class="abs" style="left:247px;top:364px;width:5px;height:5px;background:#dfdfe6"></div><div class="abs" style="left:262px;top:354px;width:5px;height:5px;background:#dfdfe7"></div><div class="abs" style="left:262px;top:359px;width:5px;height:5px;background:#d7d8e0"></div><div class="abs" style="left:262px;top:364px;width:5px;height:5px;background:#dfdfe6"></div><div class="abs" style="left:267px;top:354px;width:5px;height:5px;background:#e1e2e9"></div><div class="abs" style="left:267px;top:359px;width:5px;height:5px;background:#bfc1d1"></div><div class="abs" style="left:267px;top:364px;width:5px;height:5px;background:#d3d4dd"></div><div class="abs" style="left:272px;top:354px;width:5px;height:5px;background:#eaeaef"></div><div class="abs" style="left:272px;top:359px;width:5px;height:5px;background:#d3d4dd"></div><div class="abs" style="left:272px;top:364px;width:5px;height:5px;background:#dfdfe6"></div><div class="abs" style="left:277px;top:354px;width:5px;height:5px;background:#e1e2e9"></div><div class="abs" style="left:277px;top:359px;width:5px;height:5px;background:#c4c5d3"></div><div class="abs" style="left:277px;top:364px;width:5px;height:5px;background:#d9dae2"></div><div class="abs" style="left:282px;top:354px;width:5px;height:5px;background:#e6e6ec"></div><div class="abs" style="left:282px;top:359px;width:5px;height:5px;background:#d7d8e0"></div><div class="abs" style="left:282px;top:364px;width:5px;height:5px;background:#d3d4dd"></div><div class="abs" style="left:287px;top:354px;width:1px;height:5px;background:#dfdfe7"></div><div class="abs" style="left:287px;top:359px;width:1px;height:5px;background:#cbccd7"></div><div class="abs" style="left:287px;top:364px;width:1px;height:5px;background:#dfdfe6"></div><div class="abs" style="left:292px;top:354px;width:5px;height:5px;background:#d8d9e2"></div><div class="abs" style="left:292px;top:359px;width:5px;height:5px;background:#bfc1d1"></div><div class="abs" style="left:292px;top:364px;width:5px;height:5px;background:#dfdfe6"></div><div class="abs" style="left:297px;top:354px;width:5px;height:5px;background:#e6e6ec"></div><div class="abs" style="left:297px;top:359px;width:5px;height:5px;background:#d3d4dd"></div><div class="abs" style="left:297px;top:364px;width:5px;height:5px;background:#dfdfe6"></div><div class="abs" style="left:302px;top:354px;width:5px;height:5px;background:#ededf1"></div><div class="abs" style="left:302px;top:359px;width:5px;height:5px;background:#c4c5d3"></div><div class="abs" style="left:302px;top:364px;width:5px;height:5px;background:#d3d4dd"></div><div class="abs" style="left:307px;top:354px;width:5px;height:5px;background:#eaeaef"></div><div class="abs" style="left:307px;top:359px;width:5px;height:5px;background:#bfc1d1"></div><div class="abs" style="left:307px;top:364px;width:5px;height:5px;background:#d9dae2"></div><div class="abs" style="left:312px;top:354px;width:5px;height:5px;background:#e6e6ec"></div><div class="abs" style="left:312px;top:359px;width:5px;height:5px;background:#d7d8e0"></div><div class="abs" style="left:312px;top:364px;width:5px;height:5px;background:#dfdfe6"></div><div class="abs" style="left:317px;top:354px;width:5px;height:5px;background:#dfdfe7"></div><div class="abs" style="left:317px;top:359px;width:5px;height:5px;background:#bfc1d1"></div><div class="abs" style="left:317px;top:364px;width:5px;height:5px;background:#dfdfe6"></div><div class="abs" style="left:322px;top:354px;width:5px;height:5px;background:#dfdfe7"></div><div class="abs" style="left:322px;top:359px;width:5px;height:5px;background:#d3d4dd"></div><div class="abs" style="left:322px;top:364px;width:5px;height:5px;background:#d9dae2"></div><div class="abs" style="left:327px;top:354px;width:5px;height:5px;background:#ededf1"></div><div class="abs" style="left:327px;top:359px;width:5px;height:5px;background:#d3d4dd"></div><div class="abs" style="left:327px;top:364px;width:5px;height:5px;background:#dfdfe6"></div><div class="abs" style="left:332px;top:354px;width:5px;height:5px;background:#d8d9e2"></div><div class="abs" style="left:332px;top:359px;width:5px;height:5px;background:#d3d4dd"></div><div class="abs" style="left:332px;top:364px;width:5px;height:5px;background:#d3d4dd"></div><div class="abs" style="left:337px;top:354px;width:1px;height:5px;background:#d8d9e2"></div><div class="abs" style="left:337px;top:359px;width:1px;height:5px;background:#d3d4dd"></div><div class="abs" style="left:337px;top:364px;width:1px;height:5px;background:#e3e3e9"></div><div class="abs" style="left:342px;top:354px;width:5px;height:5px;background:#dfdfe7"></div><div class="abs" style="left:342px;top:359px;width:5px;height:5px;background:#c4c5d3"></div><div class="abs" style="left:342px;top:364px;width:5px;height:5px;background:#e3e3e9"></div><div class="abs" style="left:347px;top:354px;width:5px;height:5px;background:#e6e6ec"></div><div class="abs" style="left:347px;top:359px;width:5px;height:5px;background:#c4c5d3"></div><div class="abs" style="left:347px;top:364px;width:5px;height:5px;background:#dfdfe6"></div><div class="abs" style="left:352px;top:354px;width:5px;height:5px;background:#eaeaef"></div><div class="abs" style="left:352px;top:359px;width:5px;height:5px;background:#cdced9"></div><div class="abs" style="left:352px;top:364px;width:5px;height:5px;background:#e3e3e9"></div><div class="abs" style="left:357px;top:354px;width:5px;height:5px;background:#ededf1"></div><div class="abs" style="left:357px;top:359px;width:5px;height:5px;background:#d7d8e0"></div><div class="abs" style="left:357px;top:364px;width:5px;height:5px;background:#e3e3e9"></div><div class="abs" style="left:362px;top:354px;width:5px;height:5px;background:#ededf1"></div><div class="abs" style="left:362px;top:359px;width:5px;height:5px;background:#cbccd7"></div><div class="abs" style="left:362px;top:364px;width:5px;height:5px;background:#dfdfe6"></div><div class="abs" style="left:367px;top:354px;width:5px;height:5px;background:#e6e6ec"></div><div class="abs" style="left:367px;top:359px;width:5px;height:5px;background:#cbccd7"></div><div class="abs" style="left:367px;top:364px;width:5px;height:5px;background:#e3e3e9"></div><div class="abs" style="left:372px;top:354px;width:5px;height:5px;background:#e1e2e9"></div><div class="abs" style="left:372px;top:359px;width:5px;height:5px;background:#cbccd7"></div><div class="abs" style="left:372px;top:364px;width:5px;height:5px;background:#d3d4dd"></div><div class="abs" style="left:382px;top:354px;width:5px;height:5px;background:#ededf1"></div><div class="abs" style="left:382px;top:359px;width:5px;height:5px;background:#d3d4dd"></div><div class="abs" style="left:382px;top:364px;width:5px;height:5px;background:#dfdfe6"></div><div class="abs" style="left:387px;top:354px;width:5px;height:5px;background:#e6e6ec"></div><div class="abs" style="left:387px;top:359px;width:5px;height:5px;background:#bfc1d1"></div><div class="abs" style="left:387px;top:364px;width:5px;height:5px;background:#d3d4dd"></div><div class="abs" style="left:392px;top:354px;width:5px;height:5px;background:#e6e6ec"></div><div class="abs" style="left:392px;top:359px;width:5px;height:5px;background:#bfc1d1"></div><div class="abs" style="left:392px;top:364px;width:5px;height:5px;background:#dfdfe6"></div><div class="abs" style="left:397px;top:354px;width:5px;height:5px;background:#e6e6ec"></div><div class="abs" style="left:397px;top:359px;width:5px;height:5px;background:#cdced9"></div><div class="abs" style="left:397px;top:364px;width:5px;height:5px;background:#dfdfe6"></div><div class="abs" style="left:402px;top:354px;width:5px;height:5px;background:#d8d9e2"></div><div class="abs" style="left:402px;top:359px;width:5px;height:5px;background:#d7d8e0"></div><div class="abs" style="left:402px;top:364px;width:5px;height:5px;background:#d9dae2"></div><div class="abs" style="left:407px;top:354px;width:5px;height:5px;background:#e6e6ec"></div><div class="abs" style="left:407px;top:359px;width:5px;height:5px;background:#c4c5d3"></div><div class="abs" style="left:407px;top:364px;width:5px;height:5px;background:#d9dae2"></div><div class="abs" style="left:412px;top:354px;width:5px;height:5px;background:#eaeaef"></div><div class="abs" style="left:412px;top:359px;width:5px;height:5px;background:#d7d8e0"></div><div class="abs" style="left:412px;top:364px;width:5px;height:5px;background:#d3d4dd"></div><div class="abs" style="left:417px;top:354px;width:5px;height:5px;background:#eaeaef"></div><div class="abs" style="left:417px;top:359px;width:5px;height:5px;background:#cbccd7"></div><div class="abs" style="left:417px;top:364px;width:5px;height:5px;background:#d9dae2"></div></div>
<div class="abs" style="left:6px;top:449px;width:122px;height:1px;background:#efefef"></div>
<div class="abs" style="left:508px;top:449px;width:792px;height:1px;background:#efefef"></div>
<div class="abs" style="left:819px;top:399px;width:121px;height:50px;background:#7f8b8c"></div>
<div class="abs" style="left:1121px;top:399px;width:91px;height:50px;background:#e74c3c"></div>
<div class="abs td" style="left:24px;top:403px">May-2021</div>
<div class="abs td" style="left:726px;top:403px">Karachi</div>
<div class="abs td tot" style="right:383px;top:403px"><span class="rs">Rs</span> 4,600.00</div>
<div class="abs td" style="left:949px;top:403px">SRB</div>
<div class="abs td" style="right:203px;top:403px">13.00</div>
<div class="abs td" style="right:111px;top:403px;color:#fff;-webkit-text-stroke:0.25px #fff">598.00</div>
<div class="abs td" style="left:1221px;top:403px">MCH-2955</div>
<div class="abs" style="left:0;top:0;width:1300px;height:594px;filter:blur(0.5px)"><div class="abs" style="left:132px;top:405px;width:5px;height:5px;background:#ededf1"></div><div class="abs" style="left:132px;top:410px;width:5px;height:5px;background:#d7d8e0"></div><div class="abs" style="left:132px;top:415px;width:5px;height:5px;background:#e3e3e9"></div><div class="abs" style="left:137px;top:405px;width:5px;height:5px;background:#e6e6ec"></div><div class="abs" style="left:137px;top:410px;width:5px;height:5px;background:#d7d8e0"></div><div class="abs" style="left:137px;top:415px;width:5px;height:5px;background:#d9dae2"></div><div class="abs" style="left:142px;top:405px;width:5px;height:5px;background:#dfdfe7"></div><div class="abs" style="left:142px;top:410px;width:5px;height:5px;background:#c8c9d5"></div><div class="abs" style="left:142px;top:415px;width:5px;height:5px;background:#d3d4dd"></div><div class="abs" style="left:147px;top:405px;width:5px;height:5px;background:#ededf1"></div><div class="abs" style="left:147px;top:410px;width:5px;height:5px;background:#c4c5d3"></div><div class="abs" style="left:147px;top:415px;width:5px;height:5px;background:#d9dae2"></div><div class="abs" style="left:152px;top:405px;width:5px;height:5px;background:#dfdfe7"></div><div class="abs" style="left:152px;top:410px;width:5px;height:5px;background:#c8c9d5"></div><div class="abs" style="left:152px;top:415px;width:5px;height:5px;background:#dfdfe6"></div><div class="abs" style="left:157px;top:405px;width:5px;height:5px;background:#e6e6ec"></div><div class="abs" style="left:157px;top:410px;width:5px;height:5px;background:#d7d8e0"></div><div class="abs" style="left:157px;top:415px;width:5px;height:5px;background:#d9dae2"></div><div class="abs" style="left:162px;top:405px;width:5px;height:5px;background:#eaeaef"></div><div class="abs" style="left:162px;top:410px;width:5px;height:5px;background:#c8c9d5"></div><div class="abs" style="left:162px;top:415px;width:5px;height:5px;background:#d3d4dd"></div><div class="abs" style="left:167px;top:405px;width:5px;height:5px;background:#eaeaef"></div><div class="abs" style="left:167px;top:410px;width:5px;height:5px;background:#bfc1d1"></div><div class="abs" style="left:167px;top:415px;width:5px;height:5px;background:#d9dae2"></div><div class="abs" style="left:172px;top:405px;width:5px;height:5px;background:#d8d9e2"></div><div class="abs" style="left:172px;top:410px;width:5px;height:5px;background:#cbccd7"></div><div class="abs" style="left:172px;top:415px;width:5px;height:5px;background:#e3e3e9"></div><div class="abs" style="left:177px;top:405px;width:5px;height:5px;background:#e6e6ec"></div><div class="abs" style="left:177px;top:410px;width:5px;height:5px;background:#bfc1d1"></div><div class="abs" style="left:177px;top:415px;width:5px;height:5px;background:#d3d4dd"></div><div class="abs" style="left:182px;top:405px;width:5px;height:5px;background:#eaeaef"></div><div class="abs" style="left:182px;top:410px;width:5px;height:5px;background:#d3d4dd"></div><div class="abs" style="left:182px;top:415px;width:5px;height:5px;background:#e3e3e9"></div><div class="abs" style="left:187px;top:405px;width:5px;height:5px;background:#e6e6ec"></div><div class="abs" style="left:187px;top:410px;width:5px;height:5px;background:#c4c5d3"></div><div class="abs" style="left:187px;top:415px;width:5px;height:5px;background:#d3d4dd"></div><div class="abs" style="left:192px;top:405px;width:5px;height:5px;background:#e6e6ec"></div><div class="abs" style="left:192px;top:410px;width:5px;height:5px;background:#bfc1d1"></div><div class="abs" style="left:192px;top:415px;width:5px;height:5px;background:#d9dae2"></div><div class="abs" style="left:197px;top:405px;width:5px;height:5px;background:#eaeaef"></div><div class="abs" style="left:197px;top:410px;width:5px;height:5px;background:#cdced9"></div><div class="abs" style="left:197px;top:415px;width:5px;height:5px;background:#d9dae2"></div><div class="abs" style="left:202px;top:405px;width:5px;height:5px;background:#e6e6ec"></div><div class="abs" style="left:202px;top:410px;width:5px;height:5px;background:#cdced9"></div><div class="abs" style="left:202px;top:415px;width:5px;height:5px;background:#e3e3e9"></div><div class="abs" style="left:207px;top:405px;width:5px;height:5px;background:#e6e6ec"></div><div class="abs" style="left:207px;top:410px;width:5px;height:5px;background:#bfc1d1"></div><div class="abs" style="left:207px;top:415px;width:5px;height:5px;background:#d9dae2"></div><div class="abs" style="left:212px;top:405px;width:5px;height:5px;background:#ededf1"></div><div class="abs" style="left:212px;top:410px;width:5px;height:5px;background:#d7d8e0"></div><div class="abs" style="left:212px;top:415px;width:5px;height:5px;background:#e3e3e9"></div><div class="abs" style="left:222px;top:405px;width:5px;height:5px;background:#dfdfe7"></div><div class="abs" style="left:222px;top:410px;width:5px;height:5px;background:#c8c9d5"></div><div class="abs" style="left:222px;top:415px;width:5px;height:5px;background:#d3d4dd"></div><div class="abs" style="left:227px;top:405px;width:5px;height:5px;background:#e6e6ec"></div><div class="abs" style="left:227px;top:410px;width:5px;height:5px;background:#d3d4dd"></div><div class="abs" style="left:227px;top:415px;width:5px;height:5px;background:#e3e3e9"></div><div class="abs" style="left:232px;top:405px;width:5px;height:5px;background:#e1e2e9"></div><div class="abs" style="left:232px;top:410px;width:5px;height:5px;background:#c4c5d3"></div><div class="abs" style="left:232px;top:415px;width:5px;height:5px;background:#d3d4dd"></div><div class="abs" style="left:237px;top:405px;width:5px;height:5px;background:#dfdfe7"></div><div class="abs" style="left:237px;top:410px;width:5px;height:5px;background:#d3d4dd"></div><div class="abs" style="left:237px;top:415px;width:5px;height:5px;background:#dfdfe6"></div><div class="abs" style="left:242px;top:405px;width:5px;height:5px;background:#dfdfe7"></div><div class="abs" style="left:242px;top:410px;width:5px;height:5px;background:#c4c5d3"></div><div class="abs" style="left:242px;top:415px;width:5px;height:5px;background:#d9dae2"></div><div class="abs" style="left:247px;top:405px;width:5px;height:5px;background:#eaeaef"></div><div class="abs" style="left:247px;top:410px;width:5px;height:5px;background:#d7d8e0"></div><div class="abs" style="left:247px;top:415px;width:5px;height:5px;background:#d9dae2"></div><div class="abs" style="left:252px;top:405px;width:5px;height:5px;background:#e1e2e9"></div><div class="abs" style="left:252px;top:410px;width:5px;height:5px;background:#cbccd7"></div><div class="abs" style="left:252px;top:415px;width:5px;height:5px;background:#e3e3e9"></div><div class="abs" style="left:257px;top:405px;width:5px;height:5px;background:#e6e6ec"></div><div class="abs" style="left:257px;top:410px;width:5px;height:5px;background:#d7d8e0"></div><div class="abs" style="left:257px;top:415px;width:5px;height:5px;background:#dfdfe6"></div><div class="abs" style="left:262px;top:405px;width:5px;height:5px;background:#e6e6ec"></div><div class="abs" style="left:262px;top:410px;width:5px;height:5px;background:#d3d4dd"></div><div class="abs" style="left:262px;top:415px;width:5px;height:5px;background:#e3e3e9"></div><div class="abs" style="left:267px;top:405px;width:5px;height:5px;background:#ededf1"></div><div class="abs" style="left:267px;top:410px;width:5px;height:5px;background:#cbccd7"></div><div class="abs" style="left:267px;top:415px;width:5px;height:5px;background:#e3e3e9"></div><div class="abs" style="left:272px;top:405px;width:5px;height:5px;background:#e1e2e9"></div><div class="abs" style="left:272px;top:410px;width:5px;height:5px;background:#bfc1d1"></div><div class="abs" style="left:272px;top:415px;width:5px;height:5px;background:#d9dae2"></div><div class="abs" style="left:277px;top:405px;width:5px;height:5px;background:#ededf1"></div><div class="abs" style="left:277px;top:410px;width:5px;height:5px;background:#c4c5d3"></div><div class="abs" style="left:277px;top:415px;width:5px;height:5px;background:#d9dae2"></div><div class="abs" style="left:282px;top:405px;width:5px;height:5px;background:#dfdfe7"></div><div class="abs" style="left:282px;top:410px;width:5px;height:5px;background:#cbccd7"></div><div class="abs" style="left:282px;top:415px;width:5px;height:5px;background:#e3e3e9"></div><div class="abs" style="left:287px;top:405px;width:1px;height:5px;background:#e1e2e9"></div><div class="abs" style="left:287px;top:410px;width:1px;height:5px;background:#d3d4dd"></div><div class="abs" style="left:287px;top:415px;width:1px;height:5px;background:#e3e3e9"></div><div class="abs" style="left:292px;top:405px;width:5px;height:5px;background:#e1e2e9"></div><div class="abs" style="left:292px;top:410px;width:5px;height:5px;background:#c4c5d3"></div><div class="abs" style="left:292px;top:415px;width:5px;height:5px;background:#e3e3e9"></div><div class="abs" style="left:297px;top:405px;width:5px;height:5px;background:#e6e6ec"></div><div class="abs" style="left:297px;top:410px;width:5px;height:5px;background:#c8c9d5"></div><div class="abs" style="left:297px;top:415px;width:5px;height:5px;background:#dfdfe6"></div><div class="abs" style="left:302px;top:405px;width:5px;height:5px;background:#ededf1"></div><div class="abs" style="left:302px;top:410px;width:5px;height:5px;background:#d3d4dd"></div><div class="abs" style="left:302px;top:415px;width:5px;height:5px;background:#d9dae2"></div><div class="abs" style="left:307px;top:405px;width:5px;height:5px;background:#d8d9e2"></div><div class="abs" style="left:307px;top:410px;width:5px;height:5px;background:#c8c9d5"></div><div class="abs" style="left:307px;top:415px;width:5px;height:5px;background:#e3e3e9"></div><div class="abs" style="left:312px;top:405px;width:5px;height:5px;background:#eaeaef"></div><div class="abs" style="left:312px;top:410px;width:5px;height:5px;background:#cdced9"></div><div class="abs" style="left:312px;top:415px;width:5px;height:5px;background:#d3d4dd"></div><div class="abs" style="left:317px;top:405px;width:5px;height:5px;background:#dfdfe7"></div><div class="abs" style="left:317px;top:410px;width:5px;height:5px;background:#d7d8e0"></div><div class="abs" style="left:317px;top:415px;width:5px;height:5px;background:#d3d4dd"></div><div class="abs" style="left:322px;top:405px;width:5px;height:5px;background:#e6e6ec"></div><div class="abs" style="left:322px;top:410px;width:5px;height:5px;background:#c4c5d3"></div><div class="abs" style="left:322px;top:415px;width:5px;height:5px;background:#d9dae2"></div><div class="abs" style="left:327px;top:405px;width:5px;height:5px;background:#e1e2e9"></div><div class="abs" style="left:327px;top:410px;width:5px;height:5px;background:#cbccd7"></div><div class="abs" style="left:327px;top:415px;width:5px;height:5px;background:#e3e3e9"></div><div class="abs" style="left:332px;top:405px;width:5px;height:5px;background:#e1e2e9"></div><div class="abs" style="left:332px;top:410px;width:5px;height:5px;background:#cdced9"></div><div class="abs" style="left:332px;top:415px;width:5px;height:5px;background:#d3d4dd"></div></div>
<div class="abs" style="left:6px;top:500px;width:122px;height:1px;background:#efefef"></div>
<div class="abs" style="left:508px;top:500px;width:792px;height:1px;background:#efefef"></div>
<div class="abs" style="left:819px;top:450px;width:121px;height:50px;background:#7f8b8c"></div>
<div class="abs" style="left:1121px;top:450px;width:91px;height:50px;background:#e74c3c"></div>
<div class="abs td" style="left:24px;top:454px">May-2021</div>
<div class="abs td" style="left:595px;top:454px">9620</div>
<div class="abs td" style="left:726px;top:454px">Quetta</div>
<div class="abs td tot" style="right:383px;top:454px"><span class="rs">Rs</span> 1,665.30</div>
<div class="abs td" style="left:949px;top:454px">SRB</div>
<div class="abs td" style="right:203px;top:454px">13.00</div>
<div class="abs td" style="right:111px;top:454px;color:#fff;-webkit-text-stroke:0.25px #fff">216.49</div>
<div class="abs td" style="left:1221px;top:454px">MCH-4224</div>
<div class="abs td" style="left:1221px;top:474px">MCH-2378</div>
<div class="abs" style="left:0;top:0;width:1300px;height:594px;filter:blur(0.5px)"><div class="abs" style="left:131px;top:456px;width:5px;height:5px;background:#ededf1"></div><div class="abs" style="left:131px;top:461px;width:5px;height:5px;background:#d7d8e0"></div><div class="abs" style="left:131px;top:466px;width:5px;height:5px;background:#d9dae2"></div><div class="abs" style="left:136px;top:456px;width:5px;height:5px;background:#ededf1"></div><div class="abs" style="left:136px;top:461px;width:5px;height:5px;background:#cbccd7"></div><div class="abs" style="left:136px;top:466px;width:5px;height:5px;background:#d9dae2"></div><div class="abs" style="left:141px;top:456px;width:5px;height:5px;background:#d8d9e2"></div><div class="abs" style="left:141px;top:461px;width:5px;height:5px;background:#c8c9d5"></div><div class="abs" style="left:141px;top:466px;width:5px;height:5px;background:#dfdfe6"></div><div class="abs" style="left:146px;top:456px;width:5px;height:5px;background:#d8d9e2"></div><div class="abs" style="left:146px;top:461px;width:5px;height:5px;background:#cdced9"></div><div class="abs" style="left:146px;top:466px;width:5px;height:5px;background:#d9dae2"></div><div class="abs" style="left:151px;top:456px;width:5px;height:5px;background:#ededf1"></div><div class="abs" style="left:151px;top:461px;width:5px;height:5px;background:#cdced9"></div><div class="abs" style="left:151px;top:466px;width:5px;height:5px;background:#e3e3e9"></div><div class="abs" style="left:156px;top:456px;width:5px;height:5px;background:#eaeaef"></div><div class="abs" style="left:156px;top:461px;width:5px;height:5px;background:#bfc1d1"></div><div class="abs" style="left:156px;top:466px;width:5px;height:5px;background:#d9dae2"></div><div class="abs" style="left:161px;top:456px;width:5px;height:5px;background:#dfdfe7"></div><div class="abs" style="left:161px;top:461px;width:5px;height:5px;background:#bfc1d1"></div><div class="abs" style="left:161px;top:466px;width:5px;height:5px;background:#d9dae2"></div><div class="abs" style="left:166px;top:456px;width:5px;height:5px;background:#e6e6ec"></div><div class="abs" style="left:166px;top:461px;width:5px;height:5px;background:#bfc1d1"></div><div class="abs" style="left:166px;top:466px;width:5px;height:5px;background:#d9dae2"></div><div class="abs" style="left:171px;top:456px;width:5px;height:5px;background:#e1e2e9"></div><div class="abs" style="left:171px;top:461px;width:5px;height:5px;background:#c4c5d3"></div><div class="abs" style="left:171px;top:466px;width:5px;height:5px;background:#d3d4dd"></div><div class="abs" style="left:176px;top:456px;width:5px;height:5px;background:#ededf1"></div><div class="abs" style="left:176px;top:461px;width:5px;height:5px;background:#d3d4dd"></div><div class="abs" style="left:176px;top:466px;width:5px;height:5px;background:#d9dae2"></div><div class="abs" style="left:181px;top:456px;width:5px;height:5px;background:#e6e6ec"></div><div class="abs" style="left:181px;top:461px;width:5px;height:5px;background:#bfc1d1"></div><div class="abs" style="left:181px;top:466px;width:5px;height:5px;background:#dfdfe6"></div><div class="abs" style="left:186px;top:456px;width:5px;height:5px;background:#e6e6ec"></div><div class="abs" style="left:186px;top:461px;width:5px;height:5px;background:#d7d8e0"></div><div class="abs" style="left:186px;top:466px;width:5px;height:5px;background:#d9dae2"></div><div class="abs" style="left:191px;top:456px;width:5px;height:5px;background:#ededf1"></div><div class="abs" style="left:191px;top:461px;width:5px;height:5px;background:#cdced9"></div><div class="abs" style="left:191px;top:466px;width:5px;height:5px;background:#d3d4dd"></div><div class="abs" style="left:196px;top:456px;width:5px;height:5px;background:#ededf1"></div><div class="abs" style="left:196px;top:461px;width:5px;height:5px;background:#c8c9d5"></div><div class="abs" style="left:196px;top:466px;width:5px;height:5px;background:#d9dae2"></div><div class="abs" style="left:201px;top:456px;width:5px;height:5px;background:#eaeaef"></div><div class="abs" style="left:201px;top:461px;width:5px;height:5px;background:#c8c9d5"></div><div class="abs" style="left:201px;top:466px;width:5px;height:5px;background:#dfdfe6"></div><div class="abs" style="left:206px;top:456px;width:5px;height:5px;background:#d8d9e2"></div><div class="abs" style="left:206px;top:461px;width:5px;height:5px;background:#d7d8e0"></div><div class="abs" style="left:206px;top:466px;width:5px;height:5px;background:#e3e3e9"></div><div class="abs" style="left:211px;top:456px;width:5px;height:5px;background:#dfdfe7"></div><div class="abs" style="left:211px;top:461px;width:5px;height:5px;background:#d3d4dd"></div><div class="abs" style="left:211px;top:466px;width:5px;height:5px;background:#e3e3e9"></div><div class="abs" style="left:216px;top:456px;width:5px;height:5px;background:#dfdfe7"></div><div class="abs" style="left:216px;top:461px;width:5px;height:5px;background:#d7d8e0"></div><div class="abs" style="left:216px;top:466px;width:5px;height:5px;background:#e3e3e9"></div><div class="abs" style="left:221px;top:456px;width:5px;height:5px;background:#e6e6ec"></div><div class="abs" style="left:221px;top:461px;width:5px;height:5px;background:#c4c5d3"></div><div class="abs" style="left:221px;top:466px;width:5px;height:5px;background:#dfdfe6"></div><div class="abs" style="left:226px;top:456px;width:1px;height:5px;background:#d8d9e2"></div><div class="abs" style="left:226px;top:461px;width:1px;height:5px;background:#bfc1d1"></div><div class="abs" style="left:226px;top:466px;width:1px;height:5px;background:#dfdfe6"></div><div class="abs" style="left:232px;top:456px;width:5px;height:5px;background:#d8d9e2"></div><div class="abs" style="left:232px;top:461px;width:5px;height:5px;background:#cbccd7"></div><div class="abs" style="left:232px;top:466px;width:5px;height:5px;background:#e3e3e9"></div><div class="abs" style="left:237px;top:456px;width:1px;height:5px;background:#eaeaef"></div><div class="abs" style="left:237px;top:461px;width:1px;height:5px;background:#cbccd7"></div><div class="abs" style="left:237px;top:466px;width:1px;height:5px;background:#e3e3e9"></div><div class="abs" style="left:241px;top:456px;width:5px;height:5px;background:#eaeaef"></div><div class="abs" style="left:241px;top:461px;width:5px;height:5px;background:#c8c9d5"></div><div class="abs" style="left:241px;top:466px;width:5px;height:5px;background:#d9dae2"></div><div class="abs" style="left:246px;top:456px;width:5px;height:5px;background:#d8d9e2"></div><div class="abs" style="left:246px;top:461px;width:5px;height:5px;background:#cbccd7"></div><div class="abs" style="left:246px;top:466px;width:5px;height:5px;background:#e3e3e9"></div><div class="abs" style="left:251px;top:456px;width:5px;height:5px;background:#e1e2e9"></div><div class="abs" style="left:251px;top:461px;width:5px;height:5px;background:#d7d8e0"></div><div class="abs" style="left:251px;top:466px;width:5px;height:5px;background:#e3e3e9"></div><div class="abs" style="left:256px;top:456px;width:5px;height:5px;background:#ededf1"></div><div class="abs" style="left:256px;top:461px;width:5px;height:5px;background:#cbccd7"></div><div class="abs" style="left:256px;top:466px;width:5px;height:5px;background:#dfdfe6"></div><div class="abs" style="left:261px;top:456px;width:5px;height:5px;background:#eaeaef"></div><div class="abs" style="left:261px;top:461px;width:5px;height:5px;background:#d3d4dd"></div><div class="abs" style="left:261px;top:466px;width:5px;height:5px;background:#dfdfe6"></div><div class="abs" style="left:266px;top:456px;width:5px;height:5px;background:#eaeaef"></div><div class="abs" style="left:266px;top:461px;width:5px;height:5px;background:#d7d8e0"></div><div class="abs" style="left:266px;top:466px;width:5px;height:5px;background:#d3d4dd"></div><div class="abs" style="left:271px;top:456px;width:5px;height:5px;background:#eaeaef"></div><div class="abs" style="left:271px;top:461px;width:5px;height:5px;background:#bfc1d1"></div><div class="abs" style="left:271px;top:466px;width:5px;height:5px;background:#d3d4dd"></div><div class="abs" style="left:276px;top:456px;width:5px;height:5px;background:#e1e2e9"></div><div class="abs" style="left:276px;top:461px;width:5px;height:5px;background:#cbccd7"></div><div class="abs" style="left:276px;top:466px;width:5px;height:5px;background:#e3e3e9"></div><div class="abs" style="left:281px;top:456px;width:5px;height:5px;background:#ededf1"></div><div class="abs" style="left:281px;top:461px;width:5px;height:5px;background:#bfc1d1"></div><div class="abs" style="left:281px;top:466px;width:5px;height:5px;background:#d3d4dd"></div><div class="abs" style="left:286px;top:456px;width:5px;height:5px;background:#eaeaef"></div><div class="abs" style="left:286px;top:461px;width:5px;height:5px;background:#d3d4dd"></div><div class="abs" style="left:286px;top:466px;width:5px;height:5px;background:#d9dae2"></div><div class="abs" style="left:291px;top:456px;width:1px;height:5px;background:#dfdfe7"></div><div class="abs" style="left:291px;top:461px;width:1px;height:5px;background:#c4c5d3"></div><div class="abs" style="left:291px;top:466px;width:1px;height:5px;background:#e3e3e9"></div><div class="abs" style="left:297px;top:456px;width:5px;height:5px;background:#eaeaef"></div><div class="abs" style="left:297px;top:461px;width:5px;height:5px;background:#c8c9d5"></div><div class="abs" style="left:297px;top:466px;width:5px;height:5px;background:#d3d4dd"></div><div class="abs" style="left:302px;top:456px;width:5px;height:5px;background:#eaeaef"></div><div class="abs" style="left:302px;top:461px;width:5px;height:5px;background:#d3d4dd"></div><div class="abs" style="left:302px;top:466px;width:5px;height:5px;background:#e3e3e9"></div><div class="abs" style="left:307px;top:456px;width:5px;height:5px;background:#eaeaef"></div><div class="abs" style="left:307px;top:461px;width:5px;height:5px;background:#c4c5d3"></div><div class="abs" style="left:307px;top:466px;width:5px;height:5px;background:#e3e3e9"></div><div class="abs" style="left:312px;top:456px;width:5px;height:5px;background:#e1e2e9"></div><div class="abs" style="left:312px;top:461px;width:5px;height:5px;background:#d7d8e0"></div><div class="abs" style="left:312px;top:466px;width:5px;height:5px;background:#dfdfe6"></div><div class="abs" style="left:317px;top:456px;width:5px;height:5px;background:#d8d9e2"></div><div class="abs" style="left:317px;top:461px;width:5px;height:5px;background:#d7d8e0"></div><div class="abs" style="left:317px;top:466px;width:5px;height:5px;background:#d9dae2"></div><div class="abs" style="left:322px;top:456px;width:5px;height:5px;background:#d8d9e2"></div><div class="abs" style="left:322px;top:461px;width:5px;height:5px;background:#cbccd7"></div><div class="abs" style="left:322px;top:466px;width:5px;height:5px;background:#d9dae2"></div><div class="abs" style="left:327px;top:456px;width:5px;height:5px;background:#d8d9e2"></div><div class="abs" style="left:327px;top:461px;width:5px;height:5px;background:#bfc1d1"></div><div class="abs" style="left:327px;top:466px;width:5px;height:5px;background:#d9dae2"></div><div class="abs" style="left:332px;top:456px;width:5px;height:5px;background:#d8d9e2"></div><div class="abs" style="left:332px;top:461px;width:5px;height:5px;background:#c8c9d5"></div><div class="abs" style="left:332px;top:466px;width:5px;height:5px;background:#dfdfe6"></div><div class="abs" style="left:337px;top:456px;width:5px;height:5px;background:#e1e2e9"></div><div class="abs" style="left:337px;top:461px;width:5px;height:5px;background:#cbccd7"></div><div class="abs" style="left:337px;top:466px;width:5px;height:5px;background:#d9dae2"></div><div class="abs" style="left:342px;top:456px;width:5px;height:5px;background:#eaeaef"></div><div class="abs" style="left:342px;top:461px;width:5px;height:5px;background:#bfc1d1"></div><div class="abs" style="left:342px;top:466px;width:5px;height:5px;background:#d3d4dd"></div><div class="abs" style="left:347px;top:456px;width:5px;height:5px;background:#eaeaef"></div><div class="abs" style="left:347px;top:461px;width:5px;height:5px;background:#c8c9d5"></div><div class="abs" style="left:347px;top:466px;width:5px;height:5px;background:#d3d4dd"></div><div class="abs" style="left:352px;top:456px;width:5px;height:5px;background:#eaeaef"></div><div class="abs" style="left:352px;top:461px;width:5px;height:5px;background:#c8c9d5"></div><div class="abs" style="left:352px;top:466px;width:5px;height:5px;background:#d9dae2"></div><div class="abs" style="left:357px;top:456px;width:5px;height:5px;background:#dfdfe7"></div><div class="abs" style="left:357px;top:461px;width:5px;height:5px;background:#c8c9d5"></div><div class="abs" style="left:357px;top:466px;width:5px;height:5px;background:#d9dae2"></div><div class="abs" style="left:362px;top:456px;width:5px;height:5px;background:#dfdfe7"></div><div class="abs" style="left:362px;top:461px;width:5px;height:5px;background:#c8c9d5"></div><div class="abs" style="left:362px;top:466px;width:5px;height:5px;background:#e3e3e9"></div><div class="abs" style="left:367px;top:456px;width:5px;height:5px;background:#e6e6ec"></div><div class="abs" style="left:367px;top:461px;width:5px;height:5px;background:#cbccd7"></div><div class="abs" style="left:367px;top:466px;width:5px;height:5px;background:#d9dae2"></div><div class="abs" style="left:376px;top:456px;width:5px;height:5px;background:#e6e6ec"></div><div class="abs" style="left:376px;top:461px;width:5px;height:5px;background:#cdced9"></div><div class="abs" style="left:376px;top:466px;width:5px;height:5px;background:#d3d4dd"></div><div class="abs" style="left:381px;top:456px;width:5px;height:5px;background:#dfdfe7"></div><div class="abs" style="left:381px;top:461px;width:5px;height:5px;background:#cdced9"></div><div class="abs" style="left:381px;top:466px;width:5px;height:5px;background:#d3d4dd"></div><div class="abs" style="left:386px;top:456px;width:5px;height:5px;background:#d8d9e2"></div><div class="abs" style="left:386px;top:461px;width:5px;height:5px;background:#d7d8e0"></div><div class="abs" style="left:386px;top:466px;width:5px;height:5px;background:#d3d4dd"></div><div class="abs" style="left:391px;top:456px;width:5px;height:5px;background:#e6e6ec"></div><div class="abs" style="left:391px;top:461px;width:5px;height:5px;background:#cdced9"></div><div class="abs" style="left:391px;top:466px;width:5px;height:5px;background:#d3d4dd"></div><div class="abs" style="left:396px;top:456px;width:5px;height:5px;background:#dfdfe7"></div><div class="abs" style="left:396px;top:461px;width:5px;height:5px;background:#c4c5d3"></div><div class="abs" style="left:396px;top:466px;width:5px;height:5px;background:#e3e3e9"></div><div class="abs" style="left:401px;top:456px;width:5px;height:5px;background:#d8d9e2"></div><div class="abs" style="left:401px;top:461px;width:5px;height:5px;background:#cdced9"></div><div class="abs" style="left:401px;top:466px;width:5px;height:5px;background:#dfdfe6"></div><div class="abs" style="left:406px;top:456px;width:5px;height:5px;background:#e1e2e9"></div><div class="abs" style="left:406px;top:461px;width:5px;height:5px;background:#d7d8e0"></div><div class="abs" style="left:406px;top:466px;width:5px;height:5px;background:#e3e3e9"></div><div class="abs" style="left:411px;top:456px;width:5px;height:5px;background:#d8d9e2"></div><div class="abs" style="left:411px;top:461px;width:5px;height:5px;background:#c8c9d5"></div><div class="abs" style="left:411px;top:466px;width:5px;height:5px;background:#d3d4dd"></div><div class="abs" style="left:416px;top:456px;width:5px;height:5px;background:#e6e6ec"></div><div class="abs" style="left:416px;top:461px;width:5px;height:5px;background:#d3d4dd"></div><div class="abs" style="left:416px;top:466px;width:5px;height:5px;background:#d9dae2"></div><div class="abs" style="left:421px;top:456px;width:5px;height:5px;background:#e1e2e9"></div><div class="abs" style="left:421px;top:461px;width:5px;height:5px;background:#c4c5d3"></div><div class="abs" style="left:421px;top:466px;width:5px;height:5px;background:#d9dae2"></div><div class="abs" style="left:426px;top:456px;width:2px;height:5px;background:#d8d9e2"></div><div class="abs" style="left:426px;top:461px;width:2px;height:5px;background:#d7d8e0"></div><div class="abs" style="left:426px;top:466px;width:2px;height:5px;background:#d3d4dd"></div><div class="abs" style="left:432px;top:456px;width:5px;height:5px;background:#e6e6ec"></div><div class="abs" style="left:432px;top:461px;width:5px;height:5px;background:#d7d8e0"></div><div class="abs" style="left:432px;top:466px;width:5px;height:5px;background:#d3d4dd"></div><div class="abs" style="left:437px;top:456px;width:5px;height:5px;background:#e1e2e9"></div><div class="abs" style="left:437px;top:461px;width:5px;height:5px;background:#bfc1d1"></div><div class="abs" style="left:437px;top:466px;width:5px;height:5px;background:#d3d4dd"></div><div class="abs" style="left:442px;top:456px;width:5px;height:5px;background:#d8d9e2"></div><div class="abs" style="left:442px;top:461px;width:5px;height:5px;background:#d3d4dd"></div><div class="abs" style="left:442px;top:466px;width:5px;height:5px;background:#d3d4dd"></div></div>
<div class="abs" style="left:6px;top:551px;width:122px;height:1px;background:#efefef"></div>
<div class="abs" style="left:508px;top:551px;width:792px;height:1px;background:#efefef"></div>
<div class="abs" style="left:819px;top:501px;width:121px;height:50px;background:#7f8b8c"></div>
<div class="abs" style="left:1121px;top:501px;width:91px;height:50px;background:#1abc9c"></div>
<div class="abs td" style="left:24px;top:505px">May-2021</div>
<div class="abs td" style="left:595px;top:505px">0289</div>
<div class="abs td" style="left:726px;top:505px">Faisalabad</div>
<div class="abs td tot" style="right:383px;top:505px"><span class="rs">Rs</span> 2,118.60</div>
<div class="abs td" style="left:949px;top:505px">PRA</div>
<div class="abs td" style="right:203px;top:505px">16.00</div>
<div class="abs td" style="right:111px;top:505px;color:#1f2d33;">338.98</div>
<div class="abs td" style="left:1221px;top:505px">MCH-2205</div>
<div class="abs" style="left:0;top:0;width:1300px;height:594px;filter:blur(0.5px)"><div class="abs" style="left:131px;top:507px;width:5px;height:5px;background:#e6e6ec"></div><div class="abs" style="left:131px;top:512px;width:5px;height:5px;background:#bfc1d1"></div><div class="abs" style="left:131px;top:517px;width:5px;height:5px;background:#d3d4dd"></div><div class="abs" style="left:136px;top:507px;width:5px;height:5px;background:#e1e2e9"></div><div class="abs" style="left:136px;top:512px;width:5px;height:5px;background:#d7d8e0"></div><div class="abs" style="left:136px;top:517px;width:5px;height:5px;background:#d9dae2"></div><div class="abs" style="left:141px;top:507px;width:5px;height:5px;background:#e1e2e9"></div><div class="abs" style="left:141px;top:512px;width:5px;height:5px;background:#c4c5d3"></div><div class="abs" style="left:141px;top:517px;width:5px;height:5px;background:#d3d4dd"></div><div class="abs" style="left:146px;top:507px;width:5px;height:5px;background:#e6e6ec"></div><div class="abs" style="left:146px;top:512px;width:5px;height:5px;background:#cbccd7"></div><div class="abs" style="left:146px;top:517px;width:5px;height:5px;background:#d3d4dd"></div><div class="abs" style="left:151px;top:507px;width:5px;height:5px;background:#e1e2e9"></div><div class="abs" style="left:151px;top:512px;width:5px;height:5px;background:#cbccd7"></div><div class="abs" style="left:151px;top:517px;width:5px;height:5px;background:#dfdfe6"></div><div class="abs" style="left:156px;top:507px;width:5px;height:5px;background:#e1e2e9"></div><div class="abs" style="left:156px;top:512px;width:5px;height:5px;background:#cbccd7"></div><div class="abs" style="left:156px;top:517px;width:5px;height:5px;background:#dfdfe6"></div><div class="abs" style="left:161px;top:507px;width:5px;height:5px;background:#eaeaef"></div><div class="abs" style="left:161px;top:512px;width:5px;height:5px;background:#d3d4dd"></div><div class="abs" style="left:161px;top:517px;width:5px;height:5px;background:#e3e3e9"></div><div class="abs" style="left:166px;top:507px;width:5px;height:5px;background:#e6e6ec"></div><div class="abs" style="left:166px;top:512px;width:5px;height:5px;background:#cdced9"></div><div class="abs" style="left:166px;top:517px;width:5px;height:5px;background:#dfdfe6"></div><div class="abs" style="left:171px;top:507px;width:5px;height:5px;background:#dfdfe7"></div><div class="abs" style="left:171px;top:512px;width:5px;height:5px;background:#cbccd7"></div><div class="abs" style="left:171px;top:517px;width:5px;height:5px;background:#e3e3e9"></div><div class="abs" style="left:176px;top:507px;width:1px;height:5px;background:#ededf1"></div><div class="abs" style="left:176px;top:512px;width:1px;height:5px;background:#d3d4dd"></div><div class="abs" style="left:176px;top:517px;width:1px;height:5px;background:#dfdfe6"></div><div class="abs" style="left:182px;top:507px;width:5px;height:5px;background:#d8d9e2"></div><div class="abs" style="left:182px;top:512px;width:5px;height:5px;background:#c4c5d3"></div><div class="abs" style="left:182px;top:517px;width:5px;height:5px;background:#d3d4dd"></div><div class="abs" style="left:187px;top:507px;width:5px;height:5px;background:#eaeaef"></div><div class="abs" style="left:187px;top:512px;width:5px;height:5px;background:#cbccd7"></div><div class="abs" style="left:187px;top:517px;width:5px;height:5px;background:#d9dae2"></div><div class="abs" style="left:192px;top:507px;width:5px;height:5px;background:#e6e6ec"></div><div class="abs" style="left:192px;top:512px;width:5px;height:5px;background:#cbccd7"></div><div class="abs" style="left:192px;top:517px;width:5px;height:5px;background:#dfdfe6"></div><div class="abs" style="left:197px;top:507px;width:5px;height:5px;background:#ededf1"></div><div class="abs" style="left:197px;top:512px;width:5px;height:5px;background:#d7d8e0"></div><div class="abs" style="left:197px;top:517px;width:5px;height:5px;background:#e3e3e9"></div><div class="abs" style="left:202px;top:507px;width:5px;height:5px;background:#dfdfe7"></div><div class="abs" style="left:202px;top:512px;width:5px;height:5px;background:#cdced9"></div><div class="abs" style="left:202px;top:517px;width:5px;height:5px;background:#d3d4dd"></div><div class="abs" style="left:207px;top:507px;width:5px;height:5px;background:#dfdfe7"></div><div class="abs" style="left:207px;top:512px;width:5px;height:5px;background:#c4c5d3"></div><div class="abs" style="left:207px;top:517px;width:5px;height:5px;background:#d9dae2"></div><div class="abs" style="left:217px;top:507px;width:5px;height:5px;background:#eaeaef"></div><div class="abs" style="left:217px;top:512px;width:5px;height:5px;background:#cdced9"></div><div class="abs" style="left:217px;top:517px;width:5px;height:5px;background:#e3e3e9"></div><div class="abs" style="left:222px;top:507px;width:5px;height:5px;background:#ededf1"></div><div class="abs" style="left:222px;top:512px;width:5px;height:5px;background:#d3d4dd"></div><div class="abs" style="left:222px;top:517px;width:5px;height:5px;background:#dfdfe6"></div><div class="abs" style="left:227px;top:507px;width:5px;height:5px;background:#e1e2e9"></div><div class="abs" style="left:227px;top:512px;width:5px;height:5px;background:#bfc1d1"></div><div class="abs" style="left:227px;top:517px;width:5px;height:5px;background:#d3d4dd"></div><div class="abs" style="left:232px;top:507px;width:5px;height:5px;background:#dfdfe7"></div><div class="abs" style="left:232px;top:512px;width:5px;height:5px;background:#c4c5d3"></div><div class="abs" style="left:232px;top:517px;width:5px;height:5px;background:#e3e3e9"></div><div class="abs" style="left:237px;top:507px;width:5px;height:5px;background:#ededf1"></div><div class="abs" style="left:237px;top:512px;width:5px;height:5px;background:#bfc1d1"></div><div class="abs" style="left:237px;top:517px;width:5px;height:5px;background:#d9dae2"></div><div class="abs" style="left:242px;top:507px;width:5px;height:5px;background:#dfdfe7"></div><div class="abs" style="left:242px;top:512px;width:5px;height:5px;background:#c4c5d3"></div><div class="abs" style="left:242px;top:517px;width:5px;height:5px;background:#d9dae2"></div><div class="abs" style="left:247px;top:507px;width:5px;height:5px;background:#eaeaef"></div><div class="abs" style="left:247px;top:512px;width:5px;height:5px;background:#d3d4dd"></div><div class="abs" style="left:247px;top:517px;width:5px;height:5px;background:#d9dae2"></div><div class="abs" style="left:252px;top:507px;width:5px;height:5px;background:#e1e2e9"></div><div class="abs" style="left:252px;top:512px;width:5px;height:5px;background:#cdced9"></div><div class="abs" style="left:252px;top:517px;width:5px;height:5px;background:#d9dae2"></div><div class="abs" style="left:257px;top:507px;width:5px;height:5px;background:#eaeaef"></div><div class="abs" style="left:257px;top:512px;width:5px;height:5px;background:#cbccd7"></div><div class="abs" style="left:257px;top:517px;width:5px;height:5px;background:#dfdfe6"></div><div class="abs" style="left:267px;top:507px;width:5px;height:5px;background:#ededf1"></div><div class="abs" style="left:267px;top:512px;width:5px;height:5px;background:#c4c5d3"></div><div class="abs" style="left:267px;top:517px;width:5px;height:5px;background:#e3e3e9"></div><div class="abs" style="left:272px;top:507px;width:5px;height:5px;background:#e1e2e9"></div><div class="abs" style="left:272px;top:512px;width:5px;height:5px;background:#c8c9d5"></div><div class="abs" style="left:272px;top:517px;width:5px;height:5px;background:#dfdfe6"></div><div class="abs" style="left:277px;top:507px;width:5px;height:5px;background:#d8d9e2"></div><div class="abs" style="left:277px;top:512px;width:5px;height:5px;background:#bfc1d1"></div><div class="abs" style="left:277px;top:517px;width:5px;height:5px;background:#dfdfe6"></div><div class="abs" style="left:282px;top:507px;width:5px;height:5px;background:#ededf1"></div><div class="abs" style="left:282px;top:512px;width:5px;height:5px;background:#d7d8e0"></div><div class="abs" style="left:282px;top:517px;width:5px;height:5px;background:#dfdfe6"></div><div class="abs" style="left:287px;top:507px;width:5px;height:5px;background:#ededf1"></div><div class="abs" style="left:287px;top:512px;width:5px;height:5px;background:#c8c9d5"></div><div class="abs" style="left:287px;top:517px;width:5px;height:5px;background:#dfdfe6"></div><div class="abs" style="left:292px;top:507px;width:5px;height:5px;background:#dfdfe7"></div><div class="abs" style="left:292px;top:512px;width:5px;height:5px;background:#d3d4dd"></div><div class="abs" style="left:292px;top:517px;width:5px;height:5px;background:#d3d4dd"></div><div class="abs" style="left:297px;top:507px;width:5px;height:5px;background:#e6e6ec"></div><div class="abs" style="left:297px;top:512px;width:5px;height:5px;background:#bfc1d1"></div><div class="abs" style="left:297px;top:517px;width:5px;height:5px;background:#e3e3e9"></div><div class="abs" style="left:302px;top:507px;width:5px;height:5px;background:#d8d9e2"></div><div class="abs" style="left:302px;top:512px;width:5px;height:5px;background:#bfc1d1"></div><div class="abs" style="left:302px;top:517px;width:5px;height:5px;background:#e3e3e9"></div><div class="abs" style="left:307px;top:507px;width:5px;height:5px;background:#dfdfe7"></div><div class="abs" style="left:307px;top:512px;width:5px;height:5px;background:#d7d8e0"></div><div class="abs" style="left:307px;top:517px;width:5px;height:5px;background:#d3d4dd"></div><div class="abs" style="left:312px;top:507px;width:5px;height:5px;background:#e1e2e9"></div><div class="abs" style="left:312px;top:512px;width:5px;height:5px;background:#c4c5d3"></div><div class="abs" style="left:312px;top:517px;width:5px;height:5px;background:#d3d4dd"></div><div class="abs" style="left:321px;top:507px;width:5px;height:5px;background:#e1e2e9"></div><div class="abs" style="left:321px;top:512px;width:5px;height:5px;background:#c4c5d3"></div><div class="abs" style="left:321px;top:517px;width:5px;height:5px;background:#d9dae2"></div><div class="abs" style="left:326px;top:507px;width:5px;height:5px;background:#ededf1"></div><div class="abs" style="left:326px;top:512px;width:5px;height:5px;background:#c8c9d5"></div><div class="abs" style="left:326px;top:517px;width:5px;height:5px;background:#d9dae2"></div><div class="abs" style="left:331px;top:507px;width:5px;height:5px;background:#e6e6ec"></div><div class="abs" style="left:331px;top:512px;width:5px;height:5px;background:#bfc1d1"></div><div class="abs" style="left:331px;top:517px;width:5px;height:5px;background:#dfdfe6"></div><div class="abs" style="left:336px;top:507px;width:5px;height:5px;background:#d8d9e2"></div><div class="abs" style="left:336px;top:512px;width:5px;height:5px;background:#c8c9d5"></div><div class="abs" style="left:336px;top:517px;width:5px;height:5px;background:#e3e3e9"></div><div class="abs" style="left:341px;top:507px;width:5px;height:5px;background:#eaeaef"></div><div class="abs" style="left:341px;top:512px;width:5px;height:5px;background:#c8c9d5"></div><div class="abs" style="left:341px;top:517px;width:5px;height:5px;background:#dfdfe6"></div><div class="abs" style="left:346px;top:507px;width:5px;height:5px;background:#e6e6ec"></div><div class="abs" style="left:346px;top:512px;width:5px;height:5px;background:#bfc1d1"></div><div class="abs" style="left:346px;top:517px;width:5px;height:5px;background:#e3e3e9"></div><div class="abs" style="left:351px;top:507px;width:5px;height:5px;background:#e6e6ec"></div><div class="abs" style="left:351px;top:512px;width:5px;height:5px;background:#d7d8e0"></div><div class="abs" style="left:351px;top:517px;width:5px;height:5px;background:#d3d4dd"></div><div class="abs" style="left:356px;top:507px;width:5px;height:5px;background:#e1e2e9"></div><div class="abs" style="left:356px;top:512px;width:5px;height:5px;background:#c8c9d5"></div><div class="abs" style="left:356px;top:517px;width:5px;height:5px;background:#dfdfe6"></div><div class="abs" style="left:361px;top:507px;width:5px;height:5px;background:#d8d9e2"></div><div class="abs" style="left:361px;top:512px;width:5px;height:5px;background:#bfc1d1"></div><div class="abs" style="left:361px;top:517px;width:5px;height:5px;background:#d9dae2"></div><div class="abs" style="left:366px;top:507px;width:2px;height:5px;background:#ededf1"></div><div class="abs" style="left:366px;top:512px;width:2px;height:5px;background:#cdced9"></div><div class="abs" style="left:366px;top:517px;width:2px;height:5px;background:#d9dae2"></div><div class="abs" style="left:372px;top:507px;width:5px;height:5px;background:#dfdfe7"></div><div class="abs" style="left:372px;top:512px;width:5px;height:5px;background:#d7d8e0"></div><div class="abs" style="left:372px;top:517px;width:5px;height:5px;background:#dfdfe6"></div><div class="abs" style="left:377px;top:507px;width:5px;height:5px;background:#ededf1"></div><div class="abs" style="left:377px;top:512px;width:5px;height:5px;background:#cdced9"></div><div class="abs" style="left:377px;top:517px;width:5px;height:5px;background:#e3e3e9"></div><div class="abs" style="left:382px;top:507px;width:5px;height:5px;background:#ededf1"></div><div class="abs" style="left:382px;top:512px;width:5px;height:5px;background:#cdced9"></div><div class="abs" style="left:382px;top:517px;width:5px;height:5px;background:#d3d4dd"></div><div class="abs" style="left:387px;top:507px;width:5px;height:5px;background:#dfdfe7"></div><div class="abs" style="left:387px;top:512px;width:5px;height:5px;background:#d3d4dd"></div><div class="abs" style="left:387px;top:517px;width:5px;height:5px;background:#d3d4dd"></div><div class="abs" style="left:392px;top:507px;width:5px;height:5px;background:#e1e2e9"></div><div class="abs" style="left:392px;top:512px;width:5px;height:5px;background:#cbccd7"></div><div class="abs" style="left:392px;top:517px;width:5px;height:5px;background:#dfdfe6"></div><div class="abs" style="left:397px;top:507px;width:5px;height:5px;background:#e6e6ec"></div><div class="abs" style="left:397px;top:512px;width:5px;height:5px;background:#bfc1d1"></div><div class="abs" style="left:397px;top:517px;width:5px;height:5px;background:#d9dae2"></div><div class="abs" style="left:402px;top:507px;width:5px;height:5px;background:#e1e2e9"></div><div class="abs" style="left:402px;top:512px;width:5px;height:5px;background:#cdced9"></div><div class="abs" style="left:402px;top:517px;width:5px;height:5px;background:#d3d4dd"></div><div class="abs" style="left:407px;top:507px;width:5px;height:5px;background:#eaeaef"></div><div class="abs" style="left:407px;top:512px;width:5px;height:5px;background:#cdced9"></div><div class="abs" style="left:407px;top:517px;width:5px;height:5px;background:#dfdfe6"></div><div class="abs" style="left:412px;top:507px;width:5px;height:5px;background:#d8d9e2"></div><div class="abs" style="left:412px;top:512px;width:5px;height:5px;background:#cbccd7"></div><div class="abs" style="left:412px;top:517px;width:5px;height:5px;background:#dfdfe6"></div><div class="abs" style="left:417px;top:507px;width:5px;height:5px;background:#d8d9e2"></div><div class="abs" style="left:417px;top:512px;width:5px;height:5px;background:#d3d4dd"></div><div class="abs" style="left:417px;top:517px;width:5px;height:5px;background:#d9dae2"></div></div>
<div class="abs" style="left:6px;top:592px;width:122px;height:1px;background:#efefef"></div>
<div class="abs" style="left:508px;top:592px;width:792px;height:1px;background:#efefef"></div>
<div class="abs" style="left:819px;top:552px;width:121px;height:40px;background:#7f8b8c"></div>
<div class="abs" style="left:1121px;top:552px;width:91px;height:40px;background:#1abc9c"></div>
<div class="abs td" style="left:24px;top:556px">May-2021</div>
<div class="abs td" style="left:595px;top:556px">5577</div>
<div class="abs td" style="left:726px;top:556px">Faisalabad</div>
<div class="abs td tot" style="right:383px;top:556px"><span class="rs">Rs</span> 2,547.60</div>
<div class="abs td" style="left:949px;top:556px">PRA</div>
<div class="abs td" style="right:203px;top:556px">16.00</div>
<div class="abs td" style="right:111px;top:556px;color:#1f2d33;">407.62</div>
<div class="abs td" style="left:1221px;top:556px">MCH-1295</div>
<div class="abs" style="left:0;top:0;width:1300px;height:594px;filter:blur(0.5px)"><div class="abs" style="left:131px;top:558px;width:5px;height:5px;background:#e6e6ec"></div><div class="abs" style="left:131px;top:563px;width:5px;height:5px;background:#c4c5d3"></div><div class="abs" style="left:131px;top:568px;width:5px;height:5px;background:#d9dae2"></div><div class="abs" style="left:136px;top:558px;width:5px;height:5px;background:#eaeaef"></div><div class="abs" style="left:136px;top:563px;width:5px;height:5px;background:#cbccd7"></div><div class="abs" style="left:136px;top:568px;width:5px;height:5px;background:#dfdfe6"></div><div class="abs" style="left:141px;top:558px;width:5px;height:5px;background:#d8d9e2"></div><div class="abs" style="left:141px;top:563px;width:5px;height:5px;background:#c4c5d3"></div><div class="abs" style="left:141px;top:568px;width:5px;height:5px;background:#e3e3e9"></div><div class="abs" style="left:146px;top:558px;width:5px;height:5px;background:#e1e2e9"></div><div class="abs" style="left:146px;top:563px;width:5px;height:5px;background:#cdced9"></div><div class="abs" style="left:146px;top:568px;width:5px;height:5px;background:#e3e3e9"></div><div class="abs" style="left:151px;top:558px;width:5px;height:5px;background:#eaeaef"></div><div class="abs" style="left:151px;top:563px;width:5px;height:5px;background:#cbccd7"></div><div class="abs" style="left:151px;top:568px;width:5px;height:5px;background:#e3e3e9"></div><div class="abs" style="left:156px;top:558px;width:5px;height:5px;background:#dfdfe7"></div><div class="abs" style="left:156px;top:563px;width:5px;height:5px;background:#cdced9"></div><div class="abs" style="left:156px;top:568px;width:5px;height:5px;background:#e3e3e9"></div><div class="abs" style="left:161px;top:558px;width:5px;height:5px;background:#d8d9e2"></div><div class="abs" style="left:161px;top:563px;width:5px;height:5px;background:#bfc1d1"></div><div class="abs" style="left:161px;top:568px;width:5px;height:5px;background:#e3e3e9"></div><div class="abs" style="left:166px;top:558px;width:5px;height:5px;background:#d8d9e2"></div><div class="abs" style="left:166px;top:563px;width:5px;height:5px;background:#c8c9d5"></div><div class="abs" style="left:166px;top:568px;width:5px;height:5px;background:#e3e3e9"></div><div class="abs" style="left:171px;top:558px;width:5px;height:5px;background:#e6e6ec"></div><div class="abs" style="left:171px;top:563px;width:5px;height:5px;background:#cbccd7"></div><div class="abs" style="left:171px;top:568px;width:5px;height:5px;background:#d3d4dd"></div><div class="abs" style="left:176px;top:558px;width:1px;height:5px;background:#dfdfe7"></div><div class="abs" style="left:176px;top:563px;width:1px;height:5px;background:#bfc1d1"></div><div class="abs" style="left:176px;top:568px;width:1px;height:5px;background:#d3d4dd"></div><div class="abs" style="left:182px;top:558px;width:5px;height:5px;background:#d8d9e2"></div><div class="abs" style="left:182px;top:563px;width:5px;height:5px;background:#d7d8e0"></div><div class="abs" style="left:182px;top:568px;width:5px;height:5px;background:#d3d4dd"></div><div class="abs" style="left:187px;top:558px;width:5px;height:5px;background:#ededf1"></div><div class="abs" style="left:187px;top:563px;width:5px;height:5px;background:#c4c5d3"></div><div class="abs" style="left:187px;top:568px;width:5px;height:5px;background:#dfdfe6"></div><div class="abs" style="left:192px;top:558px;width:5px;height:5px;background:#e6e6ec"></div><div class="abs" style="left:192px;top:563px;width:5px;height:5px;background:#bfc1d1"></div><div class="abs" style="left:192px;top:568px;width:5px;height:5px;background:#dfdfe6"></div><div class="abs" style="left:197px;top:558px;width:5px;height:5px;background:#dfdfe7"></div><div class="abs" style="left:197px;top:563px;width:5px;height:5px;background:#bfc1d1"></div><div class="abs" style="left:197px;top:568px;width:5px;height:5px;background:#d3d4dd"></div><div class="abs" style="left:202px;top:558px;width:5px;height:5px;background:#eaeaef"></div><div class="abs" style="left:202px;top:563px;width:5px;height:5px;background:#bfc1d1"></div><div class="abs" style="left:202px;top:568px;width:5px;height:5px;background:#e3e3e9"></div><div class="abs" style="left:207px;top:558px;width:5px;height:5px;background:#ededf1"></div><div class="abs" style="left:207px;top:563px;width:5px;height:5px;background:#c8c9d5"></div><div class="abs" style="left:207px;top:568px;width:5px;height:5px;background:#dfdfe6"></div><div class="abs" style="left:217px;top:558px;width:5px;height:5px;background:#eaeaef"></div><div class="abs" style="left:217px;top:563px;width:5px;height:5px;background:#cdced9"></div><div class="abs" style="left:217px;top:568px;width:5px;height:5px;background:#dfdfe6"></div><div class="abs" style="left:222px;top:558px;width:5px;height:5px;background:#ededf1"></div><div class="abs" style="left:222px;top:563px;width:5px;height:5px;background:#c4c5d3"></div><div class="abs" style="left:222px;top:568px;width:5px;height:5px;background:#dfdfe6"></div><div class="abs" style="left:227px;top:558px;width:5px;height:5px;background:#e1e2e9"></div><div class="abs" style="left:227px;top:563px;width:5px;height:5px;background:#cdced9"></div><div class="abs" style="left:227px;top:568px;width:5px;height:5px;background:#dfdfe6"></div><div class="abs" style="left:232px;top:558px;width:5px;height:5px;background:#e6e6ec"></div><div class="abs" style="left:232px;top:563px;width:5px;height:5px;background:#d7d8e0"></div><div class="abs" style="left:232px;top:568px;width:5px;height:5px;background:#dfdfe6"></div><div class="abs" style="left:237px;top:558px;width:5px;height:5px;background:#d8d9e2"></div><div class="abs" style="left:237px;top:563px;width:5px;height:5px;background:#c4c5d3"></div><div class="abs" style="left:237px;top:568px;width:5px;height:5px;background:#dfdfe6"></div><div class="abs" style="left:242px;top:558px;width:5px;height:5px;background:#e6e6ec"></div><div class="abs" style="left:242px;top:563px;width:5px;height:5px;background:#bfc1d1"></div><div class="abs" style="left:242px;top:568px;width:5px;height:5px;background:#d9dae2"></div><div class="abs" style="left:247px;top:558px;width:5px;height:5px;background:#d8d9e2"></div><div class="abs" style="left:247px;top:563px;width:5px;height:5px;background:#c4c5d3"></div><div class="abs" style="left:247px;top:568px;width:5px;height:5px;background:#d3d4dd"></div><div class="abs" style="left:252px;top:558px;width:5px;height:5px;background:#d8d9e2"></div><div class="abs" style="left:252px;top:563px;width:5px;height:5px;background:#cdced9"></div><div class="abs" style="left:252px;top:568px;width:5px;height:5px;background:#d9dae2"></div><div class="abs" style="left:257px;top:558px;width:5px;height:5px;background:#eaeaef"></div><div class="abs" style="left:257px;top:563px;width:5px;height:5px;background:#c4c5d3"></div><div class="abs" style="left:257px;top:568px;width:5px;height:5px;background:#d9dae2"></div><div class="abs" style="left:267px;top:558px;width:5px;height:5px;background:#d8d9e2"></div><div class="abs" style="left:267px;top:563px;width:5px;height:5px;background:#c4c5d3"></div><div class="abs" style="left:267px;top:568px;width:5px;height:5px;background:#d9dae2"></div><div class="abs" style="left:272px;top:558px;width:5px;height:5px;background:#eaeaef"></div><div class="abs" style="left:272px;top:563px;width:5px;height:5px;background:#c8c9d5"></div><div class="abs" style="left:272px;top:568px;width:5px;height:5px;background:#d9dae2"></div><div class="abs" style="left:277px;top:558px;width:5px;height:5px;background:#d8d9e2"></div><div class="abs" style="left:277px;top:563px;width:5px;height:5px;background:#c4c5d3"></div><div class="abs" style="left:277px;top:568px;width:5px;height:5px;background:#dfdfe6"></div><div class="abs" style="left:282px;top:558px;width:5px;height:5px;background:#eaeaef"></div><div class="abs" style="left:282px;top:563px;width:5px;height:5px;background:#d3d4dd"></div><div class="abs" style="left:282px;top:568px;width:5px;height:5px;background:#d9dae2"></div><div class="abs" style="left:287px;top:558px;width:5px;height:5px;background:#dfdfe7"></div><div class="abs" style="left:287px;top:563px;width:5px;height:5px;background:#cdced9"></div><div class="abs" style="left:287px;top:568px;width:5px;height:5px;background:#d9dae2"></div><div class="abs" style="left:292px;top:558px;width:5px;height:5px;background:#e1e2e9"></div><div class="abs" style="left:292px;top:563px;width:5px;height:5px;background:#d3d4dd"></div><div class="abs" style="left:292px;top:568px;width:5px;height:5px;background:#d3d4dd"></div><div class="abs" style="left:297px;top:558px;width:1px;height:5px;background:#d8d9e2"></div><div class="abs" style="left:297px;top:563px;width:1px;height:5px;background:#bfc1d1"></div><div class="abs" style="left:297px;top:568px;width:1px;height:5px;background:#d3d4dd"></div><div class="abs" style="left:302px;top:558px;width:5px;height:5px;background:#d8d9e2"></div><div class="abs" style="left:302px;top:563px;width:5px;height:5px;background:#c8c9d5"></div><div class="abs" style="left:302px;top:568px;width:5px;height:5px;background:#d3d4dd"></div><div class="abs" style="left:307px;top:558px;width:5px;height:5px;background:#e6e6ec"></div><div class="abs" style="left:307px;top:563px;width:5px;height:5px;background:#bfc1d1"></div><div class="abs" style="left:307px;top:568px;width:5px;height:5px;background:#d3d4dd"></div><div class="abs" style="left:312px;top:558px;width:5px;height:5px;background:#e1e2e9"></div><div class="abs" style="left:312px;top:563px;width:5px;height:5px;background:#d3d4dd"></div><div class="abs" style="left:312px;top:568px;width:5px;height:5px;background:#d3d4dd"></div><div class="abs" style="left:317px;top:558px;width:5px;height:5px;background:#e6e6ec"></div><div class="abs" style="left:317px;top:563px;width:5px;height:5px;background:#cdced9"></div><div class="abs" style="left:317px;top:568px;width:5px;height:5px;background:#e3e3e9"></div><div class="abs" style="left:322px;top:558px;width:5px;height:5px;background:#e6e6ec"></div><div class="abs" style="left:322px;top:563px;width:5px;height:5px;background:#d7d8e0"></div><div class="abs" style="left:322px;top:568px;width:5px;height:5px;background:#d9dae2"></div><div class="abs" style="left:327px;top:558px;width:5px;height:5px;background:#e6e6ec"></div><div class="abs" style="left:327px;top:563px;width:5px;height:5px;background:#cdced9"></div><div class="abs" style="left:327px;top:568px;width:5px;height:5px;background:#d9dae2"></div><div class="abs" style="left:332px;top:558px;width:5px;height:5px;background:#e6e6ec"></div><div class="abs" style="left:332px;top:563px;width:5px;height:5px;background:#c8c9d5"></div><div class="abs" style="left:332px;top:568px;width:5px;height:5px;background:#d9dae2"></div><div class="abs" style="left:337px;top:558px;width:5px;height:5px;background:#d8d9e2"></div><div class="abs" style="left:337px;top:563px;width:5px;height:5px;background:#cdced9"></div><div class="abs" style="left:337px;top:568px;width:5px;height:5px;background:#dfdfe6"></div><div class="abs" style="left:342px;top:558px;width:5px;height:5px;background:#e1e2e9"></div><div class="abs" style="left:342px;top:563px;width:5px;height:5px;background:#d7d8e0"></div><div class="abs" style="left:342px;top:568px;width:5px;height:5px;background:#d3d4dd"></div><div class="abs" style="left:352px;top:558px;width:5px;height:5px;background:#eaeaef"></div><div class="abs" style="left:352px;top:563px;width:5px;height:5px;background:#bfc1d1"></div><div class="abs" style="left:352px;top:568px;width:5px;height:5px;background:#e3e3e9"></div><div class="abs" style="left:357px;top:558px;width:5px;height:5px;background:#dfdfe7"></div><div class="abs" style="left:357px;top:563px;width:5px;height:5px;background:#bfc1d1"></div><div class="abs" style="left:357px;top:568px;width:5px;height:5px;background:#e3e3e9"></div><div class="abs" style="left:362px;top:558px;width:5px;height:5px;background:#dfdfe7"></div><div class="abs" style="left:362px;top:563px;width:5px;height:5px;background:#cbccd7"></div><div class="abs" style="left:362px;top:568px;width:5px;height:5px;background:#d9dae2"></div><div class="abs" style="left:367px;top:558px;width:5px;height:5px;background:#d8d9e2"></div><div class="abs" style="left:367px;top:563px;width:5px;height:5px;background:#d3d4dd"></div><div class="abs" style="left:367px;top:568px;width:5px;height:5px;background:#e3e3e9"></div><div class="abs" style="left:372px;top:558px;width:5px;height:5px;background:#e6e6ec"></div><div class="abs" style="left:372px;top:563px;width:5px;height:5px;background:#d3d4dd"></div><div class="abs" style="left:372px;top:568px;width:5px;height:5px;background:#dfdfe6"></div><div class="abs" style="left:377px;top:558px;width:5px;height:5px;background:#d8d9e2"></div><div class="abs" style="left:377px;top:563px;width:5px;height:5px;background:#cdced9"></div><div class="abs" style="left:377px;top:568px;width:5px;height:5px;background:#e3e3e9"></div><div class="abs" style="left:387px;top:558px;width:5px;height:5px;background:#ededf1"></div><div class="abs" style="left:387px;top:563px;width:5px;height:5px;background:#d3d4dd"></div><div class="abs" style="left:387px;top:568px;width:5px;height:5px;background:#e3e3e9"></div><div class="abs" style="left:392px;top:558px;width:5px;height:5px;background:#eaeaef"></div><div class="abs" style="left:392px;top:563px;width:5px;height:5px;background:#bfc1d1"></div><div class="abs" style="left:392px;top:568px;width:5px;height:5px;background:#e3e3e9"></div><div class="abs" style="left:397px;top:558px;width:5px;height:5px;background:#ededf1"></div><div class="abs" style="left:397px;top:563px;width:5px;height:5px;background:#d3d4dd"></div><div class="abs" style="left:397px;top:568px;width:5px;height:5px;background:#dfdfe6"></div><div class="abs" style="left:402px;top:558px;width:5px;height:5px;background:#dfdfe7"></div><div class="abs" style="left:402px;top:563px;width:5px;height:5px;background:#bfc1d1"></div><div class="abs" style="left:402px;top:568px;width:5px;height:5px;background:#e3e3e9"></div><div class="abs" style="left:407px;top:558px;width:5px;height:5px;background:#d8d9e2"></div><div class="abs" style="left:407px;top:563px;width:5px;height:5px;background:#c8c9d5"></div><div class="abs" style="left:407px;top:568px;width:5px;height:5px;background:#e3e3e9"></div><div class="abs" style="left:412px;top:558px;width:5px;height:5px;background:#e1e2e9"></div><div class="abs" style="left:412px;top:563px;width:5px;height:5px;background:#c4c5d3"></div><div class="abs" style="left:412px;top:568px;width:5px;height:5px;background:#d3d4dd"></div><div class="abs" style="left:417px;top:558px;width:5px;height:5px;background:#dfdfe7"></div><div class="abs" style="left:417px;top:563px;width:5px;height:5px;background:#bfc1d1"></div><div class="abs" style="left:417px;top:568px;width:5px;height:5px;background:#dfdfe6"></div><div class="abs" style="left:422px;top:558px;width:5px;height:5px;background:#ededf1"></div><div class="abs" style="left:422px;top:563px;width:5px;height:5px;background:#cbccd7"></div><div class="abs" style="left:422px;top:568px;width:5px;height:5px;background:#e3e3e9"></div><div class="abs" style="left:427px;top:558px;width:5px;height:5px;background:#d8d9e2"></div><div class="abs" style="left:427px;top:563px;width:5px;height:5px;background:#cdced9"></div><div class="abs" style="left:427px;top:568px;width:5px;height:5px;background:#dfdfe6"></div><div class="abs" style="left:432px;top:558px;width:5px;height:5px;background:#eaeaef"></div><div class="abs" style="left:432px;top:563px;width:5px;height:5px;background:#cbccd7"></div><div class="abs" style="left:432px;top:568px;width:5px;height:5px;background:#d9dae2"></div><div class="abs" style="left:437px;top:558px;width:1px;height:5px;background:#d8d9e2"></div><div class="abs" style="left:437px;top:563px;width:1px;height:5px;background:#cdced9"></div><div class="abs" style="left:437px;top:568px;width:1px;height:5px;background:#d9dae2"></div><div class="abs" style="left:442px;top:558px;width:5px;height:5px;background:#dfdfe7"></div><div class="abs" style="left:442px;top:563px;width:5px;height:5px;background:#c8c9d5"></div><div class="abs" style="left:442px;top:568px;width:5px;height:5px;background:#d9dae2"></div><div class="abs" style="left:447px;top:558px;width:5px;height:5px;background:#ededf1"></div><div class="abs" style="left:447px;top:563px;width:5px;height:5px;background:#bfc1d1"></div><div class="abs" style="left:447px;top:568px;width:5px;height:5px;background:#d9dae2"></div><div class="abs" style="left:452px;top:558px;width:5px;height:5px;background:#d8d9e2"></div><div class="abs" style="left:452px;top:563px;width:5px;height:5px;background:#c4c5d3"></div><div class="abs" style="left:452px;top:568px;width:5px;height:5px;background:#d3d4dd"></div><div class="abs" style="left:457px;top:558px;width:5px;height:5px;background:#dfdfe7"></div><div class="abs" style="left:457px;top:563px;width:5px;height:5px;background:#cdced9"></div><div class="abs" style="left:457px;top:568px;width:5px;height:5px;background:#d9dae2"></div><div class="abs" style="left:462px;top:558px;width:5px;height:5px;background:#eaeaef"></div><div class="abs" style="left:462px;top:563px;width:5px;height:5px;background:#c4c5d3"></div><div class="abs" style="left:462px;top:568px;width:5px;height:5px;background:#d9dae2"></div><div class="abs" style="left:467px;top:558px;width:5px;height:5px;background:#dfdfe7"></div><div class="abs" style="left:467px;top:563px;width:5px;height:5px;background:#d7d8e0"></div><div class="abs" style="left:467px;top:568px;width:5px;height:5px;background:#d3d4dd"></div><div class="abs" style="left:472px;top:558px;width:5px;height:5px;background:#e6e6ec"></div><div class="abs" style="left:472px;top:563px;width:5px;height:5px;background:#c4c5d3"></div><div class="abs" style="left:472px;top:568px;width:5px;height:5px;background:#d9dae2"></div><div class="abs" style="left:477px;top:558px;width:5px;height:5px;background:#e1e2e9"></div><div class="abs" style="left:477px;top:563px;width:5px;height:5px;background:#c8c9d5"></div><div class="abs" style="left:477px;top:568px;width:5px;height:5px;background:#dfdfe6"></div></div>
<svg class="abs" style="left:275px;top:386px" width="20" height="24" viewBox="0 0 20 24"><g style="filter:blur(0.9px)"><rect x="2" y="2" width="5" height="5" fill="#9d9d9d"/><rect x="2" y="7" width="5" height="5" fill="#c2c2c2"/><rect x="7" y="7" width="5" height="5" fill="#bdbdbd"/><rect x="2" y="12" width="5" height="5" fill="#b0b0b0"/><rect x="7" y="12" width="8" height="5" fill="#c9c9c9"/><rect x="7" y="17" width="5" height="4" fill="#b7b7b7"/></g></svg>
<div class="abs" style="left:6px;top:592px;width:1294px;height:2px;background:#f1f1f1"></div>
</body></html>
